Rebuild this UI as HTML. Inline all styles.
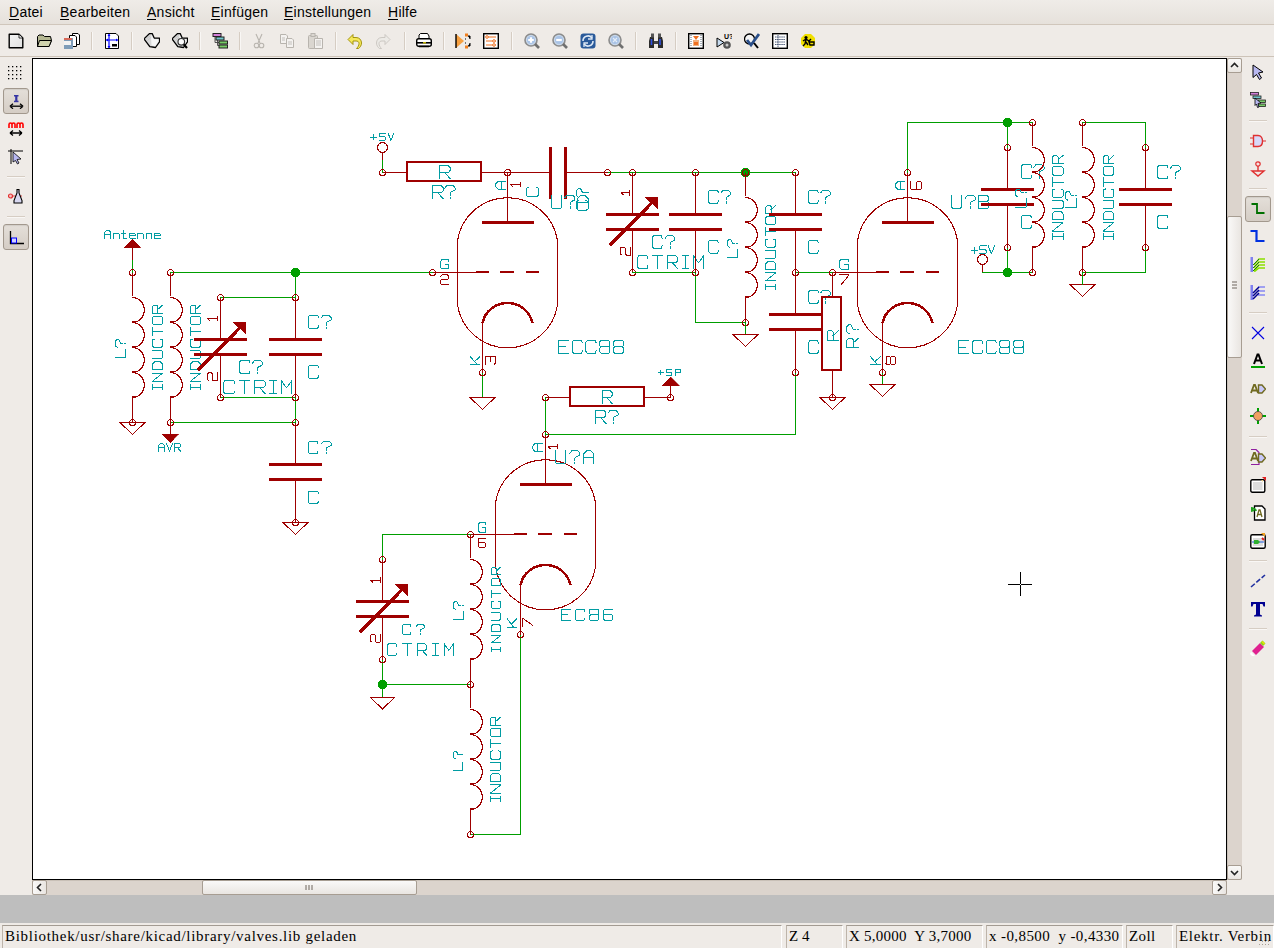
<!DOCTYPE html>
<html><head><meta charset="utf-8">
<style>
*{margin:0;padding:0;box-sizing:border-box}
html,body{width:1274px;height:948px;overflow:hidden;background:#EFEBE7;font-family:"Liberation Sans",sans-serif;position:relative}
.abs{position:absolute}
#menubar{left:0;top:0;width:1274px;height:25px;background:linear-gradient(#EFECE8,#E6E1DB);border-bottom:1px solid #D0C6BB}
.mi{position:absolute;top:4px;font-size:14px;letter-spacing:0.25px;color:#000;line-height:17px}
.mi u{text-decoration:none;position:relative}
.mi u:after{content:"";position:absolute;left:0;right:0.5px;top:15px;height:1px;background:#000}
#toolbar{left:0;top:25px;width:1274px;height:32px;background:#EFEBE7;border-bottom:1px solid #CDC3B8}
.sep{position:absolute;width:2px;background:#D6CDC3;border-right:1px solid #F9F7F5}
.hsep{position:absolute;height:2px;background:#D6CDC3;border-bottom:1px solid #F9F7F5}
#canvas{left:32px;top:58px;width:1195px;height:822px;background:#fff;border:1px solid #000;border-left-width:1px}
#vscroll{left:1227px;top:58px;width:15px;height:822px;background:#DCD4CD;border-left:1px solid #C9C0B7}
#hscroll{left:32px;top:880px;width:1195px;height:15px;background:#DCD4CD;border-top:1px solid #C9C0B7}
.sbtn{position:absolute;background:linear-gradient(90deg,#FAF9F8,#E9E5E1);border:1px solid #A79D92;border-radius:2px}
.sbtnv{position:absolute;background:linear-gradient(#FAF9F8,#E9E5E1);border:1px solid #A79D92;border-radius:2px}
#band{left:0;top:895px;width:1274px;height:28px;background:#BEBEBE}
#status{left:0;top:923px;width:1274px;height:25px;background:#EFEBE7}
.fld{position:absolute;top:2px;height:23px;border-top:1px solid #A39B92;border-left:1px solid #BDB4AA;border-right:1px solid #FFFFFF;font-family:"Liberation Serif",serif;font-size:15px;line-height:21px;padding-left:2px;white-space:nowrap;overflow:hidden;color:#000}
.pressed{position:absolute;background:linear-gradient(#E4DFD9,#D5CDC5);border:1px solid #A2988D;border-radius:3px;box-shadow:inset 0 1px 1px rgba(0,0,0,0.08)}
</style></head><body>
<div id="menubar" class="abs">
 <span class="mi" style="left:9px"><u>D</u>atei</span>
 <span class="mi" style="left:60px"><u>B</u>earbeiten</span>
 <span class="mi" style="left:147px"><u>A</u>nsicht</span>
 <span class="mi" style="left:211px"><u>E</u>infügen</span>
 <span class="mi" style="left:284px"><u>E</u>instellungen</span>
 <span class="mi" style="left:388px"><u>H</u>ilfe</span>
</div>
<div id="toolbar" class="abs"></div>
<div id="canvas" class="abs"></div>
<svg class="abs" style="left:0;top:0" width="1274" height="948" shape-rendering="crispEdges"><line x1="132.5" y1="259.5" x2="132.5" y2="272.5" stroke="#009E00" stroke-width="1" stroke-linecap="square"/><line x1="170.5" y1="272.5" x2="295.5" y2="272.5" stroke="#009E00" stroke-width="1" stroke-linecap="square"/><line x1="295.5" y1="272.5" x2="432.5" y2="272.5" stroke="#009E00" stroke-width="1" stroke-linecap="square"/><circle cx="295.5" cy="272.5" r="4.8" fill="#009E00"/><line x1="220.5" y1="297.5" x2="295.5" y2="297.5" stroke="#009E00" stroke-width="1" stroke-linecap="square"/><line x1="295.5" y1="272.5" x2="295.5" y2="297.5" stroke="#009E00" stroke-width="1" stroke-linecap="square"/><line x1="220.5" y1="397.5" x2="295.5" y2="397.5" stroke="#009E00" stroke-width="1" stroke-linecap="square"/><line x1="295.5" y1="397.5" x2="295.5" y2="422.5" stroke="#009E00" stroke-width="1" stroke-linecap="square"/><line x1="170.5" y1="422.5" x2="295.5" y2="422.5" stroke="#009E00" stroke-width="1" stroke-linecap="square"/><line x1="382.5" y1="159.5" x2="382.5" y2="172.5" stroke="#009E00" stroke-width="1" stroke-linecap="square"/><line x1="795.5" y1="172.5" x2="695.5" y2="172.5" stroke="#009E00" stroke-width="1" stroke-linecap="square"/><line x1="607.5" y1="172.5" x2="795.5" y2="172.5" stroke="#009E00" stroke-width="1" stroke-linecap="square"/><circle cx="745.5" cy="172.5" r="4.8" fill="#009E00"/><line x1="695.5" y1="272.5" x2="695.5" y2="322.5" stroke="#009E00" stroke-width="1" stroke-linecap="square"/><line x1="695.5" y1="322.5" x2="745.5" y2="322.5" stroke="#009E00" stroke-width="1" stroke-linecap="square"/><line x1="795.5" y1="272.5" x2="832.5" y2="272.5" stroke="#009E00" stroke-width="1" stroke-linecap="square"/><line x1="907.5" y1="172.5" x2="907.5" y2="122.5" stroke="#009E00" stroke-width="1" stroke-linecap="square"/><line x1="907.5" y1="122.5" x2="1032.5" y2="122.5" stroke="#009E00" stroke-width="1" stroke-linecap="square"/><circle cx="1007.5" cy="122.5" r="4.8" fill="#009E00"/><line x1="1007.5" y1="122.5" x2="1007.5" y2="147.5" stroke="#009E00" stroke-width="1" stroke-linecap="square"/><line x1="1082.5" y1="122.5" x2="1145.5" y2="122.5" stroke="#009E00" stroke-width="1" stroke-linecap="square"/><line x1="1145.5" y1="122.5" x2="1145.5" y2="147.5" stroke="#009E00" stroke-width="1" stroke-linecap="square"/><line x1="1145.5" y1="247.5" x2="1145.5" y2="272.5" stroke="#009E00" stroke-width="1" stroke-linecap="square"/><line x1="1082.5" y1="272.5" x2="1145.5" y2="272.5" stroke="#009E00" stroke-width="1" stroke-linecap="square"/><line x1="1082.5" y1="272.5" x2="1082.5" y2="284.5" stroke="#009E00" stroke-width="1" stroke-linecap="square"/><line x1="1007.5" y1="247.5" x2="1007.5" y2="272.5" stroke="#009E00" stroke-width="1" stroke-linecap="square"/><line x1="1032.5" y1="272.5" x2="982.5" y2="272.5" stroke="#009E00" stroke-width="1" stroke-linecap="square"/><circle cx="1007.5" cy="272.5" r="4.8" fill="#009E00"/><line x1="482.5" y1="372.5" x2="482.5" y2="397.5" stroke="#009E00" stroke-width="1" stroke-linecap="square"/><line x1="882.5" y1="372.5" x2="882.5" y2="384.5" stroke="#009E00" stroke-width="1" stroke-linecap="square"/><line x1="545.5" y1="397.5" x2="545.5" y2="434.5" stroke="#009E00" stroke-width="1" stroke-linecap="square"/><line x1="545.5" y1="434.5" x2="795.5" y2="434.5" stroke="#009E00" stroke-width="1" stroke-linecap="square"/><line x1="795.5" y1="434.5" x2="795.5" y2="372.5" stroke="#009E00" stroke-width="1" stroke-linecap="square"/><line x1="470.5" y1="534.5" x2="382.5" y2="534.5" stroke="#009E00" stroke-width="1" stroke-linecap="square"/><line x1="382.5" y1="534.5" x2="382.5" y2="559.5" stroke="#009E00" stroke-width="1" stroke-linecap="square"/><line x1="382.5" y1="659.5" x2="382.5" y2="684.5" stroke="#009E00" stroke-width="1" stroke-linecap="square"/><line x1="382.5" y1="684.5" x2="470.5" y2="684.5" stroke="#009E00" stroke-width="1" stroke-linecap="square"/><circle cx="382.5" cy="684.5" r="4.8" fill="#009E00"/><line x1="382.5" y1="684.5" x2="382.5" y2="697.5" stroke="#009E00" stroke-width="1" stroke-linecap="square"/><line x1="470.5" y1="834.5" x2="520.5" y2="834.5" stroke="#009E00" stroke-width="1" stroke-linecap="square"/><line x1="520.5" y1="834.5" x2="520.5" y2="634.5" stroke="#009E00" stroke-width="1" stroke-linecap="square"/><path d="M132.5 239 L124.5 247.5 L140.5 247.5 Z" stroke="#9E0000" stroke-width="0.5" fill="#9E0000"/><line x1="132.5" y1="247.5" x2="132.5" y2="259.5" stroke="#9E0000" stroke-width="1" stroke-linecap="butt"/><path d="M104.5 238.5 L104.5 232.5 L106.5 230.5 L108.9 230.5 L110.9 232.5 L110.9 238.5M104.5 234.9 L110.9 234.9M113.62 233.3 L113.62 238.5M113.62 234.1 L114.42 233.3 L118.42 233.3 L119.22 234.1 L119.22 238.5M123.13 230.5 L123.13 237.7 L123.93 238.5 L126.73 238.5M121.93 233.3 L125.93 233.3M129.45 235.86 L135.05 235.86 L135.05 234.1 L134.25 233.3 L130.25 233.3 L129.45 234.1 L129.45 237.7 L130.25 238.5 L135.05 238.5M137.77 233.3 L137.77 238.5M137.77 234.1 L138.57 233.3 L142.57 233.3 L143.37 234.1 L143.37 238.5M146.08 233.3 L146.08 238.5M146.08 234.1 L146.88 233.3 L150.88 233.3 L151.68 234.1 L151.68 238.5M154.4 235.86 L160 235.86 L160 234.1 L159.2 233.3 L155.2 233.3 L154.4 234.1 L154.4 237.7 L155.2 238.5 L160 238.5" stroke="#009CA2" stroke-width="1" fill="none" stroke-linejoin="round" stroke-linecap="square"/><line x1="132.5" y1="272.5" x2="132.5" y2="296" stroke="#9E0000" stroke-width="1" stroke-linecap="butt"/><path d="M132.5 297.5 A11.8 12.5 0 0 1 132.5 322.5 A11.8 12.5 0 0 1 132.5 347.5 A11.8 12.5 0 0 1 132.5 372.5 A11.8 12.5 0 0 1 132.5 397.5" stroke="#9E0000" stroke-width="1.2" fill="none"/><rect x="132" y="297" width="3.5" height="1" fill="#9E0000"/><rect x="132" y="321" width="3.5" height="2" fill="#9E0000"/><rect x="132" y="346" width="3.5" height="2" fill="#9E0000"/><rect x="132" y="371" width="3.5" height="2" fill="#9E0000"/><rect x="132" y="396" width="3.5" height="2" fill="#9E0000"/><line x1="132.5" y1="397.5" x2="132.5" y2="422.5" stroke="#9E0000" stroke-width="1" stroke-linecap="butt"/><circle cx="132.5" cy="272.5" r="3" stroke="#9E0000" stroke-width="1" fill="none"/><circle cx="132.5" cy="422.5" r="3" stroke="#9E0000" stroke-width="1" fill="none"/><path d="M120 422.5 L145 422.5 L132.5 434.5 L120 422.5 Z" stroke="#9E0000" stroke-width="1" fill="none"/><path d="M115.2 357.5 L125.5 357.5 L125.5 349.26M117.26 347.43 L115.2 345.89 L115.2 341.05 L116.95 339.5 L118.7 339.5 L120.76 343.31 L122.82 343.31M124.37 343.31 L125.5 343.31" stroke="#009CA2" stroke-width="1" fill="none" stroke-linejoin="round" stroke-linecap="square"/><path d="M152.5 389.5 L152.5 384.5M152.5 387 L162.5 387M162.5 389.5 L162.5 384.5M162.5 381.17 L152.5 381.17 L162.5 373.17 L152.5 373.17M152.5 369.84 L162.5 369.84 L162.5 363.84 L160.5 361.84 L154.5 361.84 L152.5 363.84 L152.5 369.84M152.5 358.51 L161.5 358.51 L162.5 357.51 L162.5 351.51 L161.5 350.51 L152.5 350.51M154.4 339.19 L152.5 339.79 L152.5 346.19 L153.8 347.19 L161.2 347.19 L162.5 346.19 L162.5 339.79 L160.6 339.19M152.5 335.86 L152.5 327.86M152.5 331.86 L162.5 331.86M152.5 323.53 L152.5 317.53 L153.5 316.53 L161.5 316.53 L162.5 317.53 L162.5 323.53 L161.5 324.53 L153.5 324.53 L152.5 323.53M162.5 313.2 L152.5 313.2 L152.5 306.7 L154 305.2 L156.5 305.2 L157.8 306.4 L157.8 313.2M157.8 309.4 L162.5 305.2" stroke="#009CA2" stroke-width="1" fill="none" stroke-linejoin="round" stroke-linecap="square"/><line x1="170.5" y1="272.5" x2="170.5" y2="296" stroke="#9E0000" stroke-width="1" stroke-linecap="butt"/><path d="M170.5 297.5 A11.8 12.5 0 0 1 170.5 322.5 A11.8 12.5 0 0 1 170.5 347.5 A11.8 12.5 0 0 1 170.5 372.5 A11.8 12.5 0 0 1 170.5 397.5" stroke="#9E0000" stroke-width="1.2" fill="none"/><rect x="170" y="297" width="3.5" height="1" fill="#9E0000"/><rect x="170" y="321" width="3.5" height="2" fill="#9E0000"/><rect x="170" y="346" width="3.5" height="2" fill="#9E0000"/><rect x="170" y="371" width="3.5" height="2" fill="#9E0000"/><rect x="170" y="396" width="3.5" height="2" fill="#9E0000"/><line x1="170.5" y1="397.5" x2="170.5" y2="422.5" stroke="#9E0000" stroke-width="1" stroke-linecap="butt"/><circle cx="170.5" cy="272.5" r="3" stroke="#9E0000" stroke-width="1" fill="none"/><circle cx="170.5" cy="422.5" r="3" stroke="#9E0000" stroke-width="1" fill="none"/><line x1="170.5" y1="422.5" x2="170.5" y2="434" stroke="#9E0000" stroke-width="1" stroke-linecap="butt"/><path d="M162 434 L178.5 434 L170.5 443 Z" stroke="#9E0000" stroke-width="0.5" fill="#9E0000"/><path d="M158.5 451 L158.5 445.38 L160.38 443.5 L162.62 443.5 L164.5 445.38 L164.5 451M158.5 447.62 L164.5 447.62M166.5 443.5 L169.5 451 L172.5 443.5M174.5 451 L174.5 443.5 L179.38 443.5 L180.5 444.62 L180.5 446.5 L179.6 447.48 L174.5 447.48M177.35 447.48 L180.5 451" stroke="#009CA2" stroke-width="1" fill="none" stroke-linejoin="round" stroke-linecap="square"/><path d="M190.5 389.5 L190.5 384.5M190.5 387 L200.5 387M200.5 389.5 L200.5 384.5M200.5 381.17 L190.5 381.17 L200.5 373.17 L190.5 373.17M190.5 369.84 L200.5 369.84 L200.5 363.84 L198.5 361.84 L192.5 361.84 L190.5 363.84 L190.5 369.84M190.5 358.51 L199.5 358.51 L200.5 357.51 L200.5 351.51 L199.5 350.51 L190.5 350.51M192.4 339.19 L190.5 339.79 L190.5 346.19 L191.8 347.19 L199.2 347.19 L200.5 346.19 L200.5 339.79 L198.6 339.19M190.5 335.86 L190.5 327.86M190.5 331.86 L200.5 331.86M190.5 323.53 L190.5 317.53 L191.5 316.53 L199.5 316.53 L200.5 317.53 L200.5 323.53 L199.5 324.53 L191.5 324.53 L190.5 323.53M200.5 313.2 L190.5 313.2 L190.5 306.7 L192 305.2 L194.5 305.2 L195.8 306.4 L195.8 313.2M195.8 309.4 L200.5 305.2" stroke="#009CA2" stroke-width="1" fill="none" stroke-linejoin="round" stroke-linecap="square"/><line x1="220.5" y1="297.5" x2="220.5" y2="339.5" stroke="#9E0000" stroke-width="1" stroke-linecap="butt"/><line x1="220.5" y1="354.5" x2="220.5" y2="397.5" stroke="#9E0000" stroke-width="1" stroke-linecap="butt"/><line x1="194" y1="339.5" x2="247" y2="339.5" stroke="#9E0000" stroke-width="3" stroke-linecap="butt"/><line x1="194" y1="354.5" x2="247" y2="354.5" stroke="#9E0000" stroke-width="3" stroke-linecap="butt"/><circle cx="220.5" cy="297.5" r="3" stroke="#9E0000" stroke-width="1" fill="none"/><circle cx="220.5" cy="397.5" r="3" stroke="#9E0000" stroke-width="1" fill="none"/><line x1="198" y1="370" x2="240.5" y2="327" stroke="#9E0000" stroke-width="3.5" stroke-linecap="butt"/><path d="M245.5 322 L232.5 322 L245.5 334 Z" stroke="#9E0000" stroke-width="0.5" fill="#9E0000"/><path d="M209.46 320.25 L207.5 318.75 L217.3 318.75M217.3 320.62 L217.3 316.88" stroke="#9E0000" stroke-width="1" fill="none" stroke-linejoin="round" stroke-linecap="square"/><path d="M208.97 380.8 L207.5 379.62 L207.5 373.89 L208.48 372.9 L211.42 372.9 L212.4 373.89 L212.4 379.81 L213.38 380.8 L217.3 380.8 L217.3 372.9" stroke="#9E0000" stroke-width="1" fill="none" stroke-linejoin="round" stroke-linecap="square"/><path d="M249.9 362.97 L249.12 360.5 L240.8 360.5 L239.5 362.19 L239.5 371.81 L240.8 373.5 L249.12 373.5 L249.9 371.03M252.49 363.1 L254.44 360.5 L260.55 360.5 L262.5 362.71 L262.5 364.92 L257.69 367.52 L257.69 370.12M257.69 372.07 L257.69 373.5" stroke="#009CA2" stroke-width="1" fill="none" stroke-linejoin="round" stroke-linecap="square"/><path d="M234.52 383.05 L233.72 380.5 L225.14 380.5 L223.8 382.24 L223.8 392.16 L225.14 393.9 L233.72 393.9 L234.52 391.35M239.15 380.5 L249.87 380.5M244.51 380.5 L244.51 393.9M254.5 393.9 L254.5 380.5 L263.21 380.5 L265.22 382.51 L265.22 385.86 L263.61 387.6 L254.5 387.6M259.59 387.6 L265.22 393.9M269.85 380.5 L276.55 380.5M273.2 380.5 L273.2 393.9M269.85 393.9 L276.55 393.9M281.18 393.9 L281.18 380.5 L286.54 387.87 L291.9 380.5 L291.9 393.9" stroke="#009CA2" stroke-width="1" fill="none" stroke-linejoin="round" stroke-linecap="square"/><line x1="295.5" y1="297.5" x2="295.5" y2="339.5" stroke="#9E0000" stroke-width="1" stroke-linecap="butt"/><line x1="295.5" y1="354.5" x2="295.5" y2="397.5" stroke="#9E0000" stroke-width="1" stroke-linecap="butt"/><line x1="269" y1="339.5" x2="322" y2="339.5" stroke="#9E0000" stroke-width="3" stroke-linecap="butt"/><line x1="269" y1="354.5" x2="322" y2="354.5" stroke="#9E0000" stroke-width="3" stroke-linecap="butt"/><circle cx="295.5" cy="297.5" r="3" stroke="#9E0000" stroke-width="1" fill="none"/><circle cx="295.5" cy="397.5" r="3" stroke="#9E0000" stroke-width="1" fill="none"/><path d="M318.5 317.97 L317.72 315.5 L309.4 315.5 L308.1 317.19 L308.1 326.81 L309.4 328.5 L317.72 328.5 L318.5 326.03M321.09 318.1 L323.04 315.5 L329.15 315.5 L331.1 317.71 L331.1 319.92 L326.29 322.52 L326.29 325.12M326.29 327.07 L326.29 328.5" stroke="#009CA2" stroke-width="1" fill="none" stroke-linejoin="round" stroke-linecap="square"/><path d="M318.5 367.97 L317.72 365.5 L309.4 365.5 L308.1 367.19 L308.1 376.81 L309.4 378.5 L317.72 378.5 L318.5 376.03" stroke="#009CA2" stroke-width="1" fill="none" stroke-linejoin="round" stroke-linecap="square"/><line x1="295.5" y1="422.5" x2="295.5" y2="464.5" stroke="#9E0000" stroke-width="1" stroke-linecap="butt"/><line x1="295.5" y1="479.5" x2="295.5" y2="522.5" stroke="#9E0000" stroke-width="1" stroke-linecap="butt"/><line x1="269" y1="464.5" x2="322" y2="464.5" stroke="#9E0000" stroke-width="3" stroke-linecap="butt"/><line x1="269" y1="479.5" x2="322" y2="479.5" stroke="#9E0000" stroke-width="3" stroke-linecap="butt"/><circle cx="295.5" cy="422.5" r="3" stroke="#9E0000" stroke-width="1" fill="none"/><circle cx="295.5" cy="522.5" r="3" stroke="#9E0000" stroke-width="1" fill="none"/><path d="M317.86 443.62 L317.13 441.3 L309.32 441.3 L308.1 442.89 L308.1 451.91 L309.32 453.5 L317.13 453.5 L317.86 451.18M321.71 443.74 L323.54 441.3 L329.27 441.3 L331.1 443.37 L331.1 445.45 L326.59 447.89 L326.59 450.33M326.59 452.16 L326.59 453.5" stroke="#009CA2" stroke-width="1" fill="none" stroke-linejoin="round" stroke-linecap="square"/><path d="M318.5 493.46 L317.72 491.1 L309.4 491.1 L308.1 492.71 L308.1 501.89 L309.4 503.5 L317.72 503.5 L318.5 501.14" stroke="#009CA2" stroke-width="1" fill="none" stroke-linejoin="round" stroke-linecap="square"/><path d="M283 522.5 L308 522.5 L295.5 534.5 L283 522.5 Z" stroke="#9E0000" stroke-width="1" fill="none"/><circle cx="382.5" cy="147.5" r="5" stroke="#9E0000" stroke-width="1.1" fill="none"/><line x1="382.5" y1="152.5" x2="382.5" y2="159.5" stroke="#9E0000" stroke-width="1" stroke-linecap="butt"/><path d="M370.9 137.22 L376.74 137.22M373.82 134.66 L373.82 139.77M385.32 133.2 L379.48 133.2 L379.48 136.85 L384.59 136.85 L385.32 137.58 L385.32 139.77 L384.59 140.5 L379.48 140.5M388.06 133.2 L390.98 140.5 L393.9 133.2" stroke="#009CA2" stroke-width="1" fill="none" stroke-linejoin="round" stroke-linecap="square"/><circle cx="382.5" cy="172.5" r="3" stroke="#9E0000" stroke-width="1" fill="none"/><line x1="382.5" y1="172.5" x2="407" y2="172.5" stroke="#9E0000" stroke-width="1" stroke-linecap="butt"/><line x1="481" y1="172.5" x2="507.5" y2="172.5" stroke="#9E0000" stroke-width="1" stroke-linecap="butt"/><rect x="407" y="162" width="74" height="19" fill="none" stroke="#9E0000" stroke-width="2"/><path d="M439.5 178.5 L439.5 165.5 L448.03 165.5 L450 167.45 L450 170.7 L448.43 172.39 L439.5 172.39M444.49 172.39 L450 178.5" stroke="#009CA2" stroke-width="1" fill="none" stroke-linejoin="round" stroke-linecap="square"/><path d="M432.5 198.7 L432.5 185.5 L441.08 185.5 L443.06 187.48 L443.06 190.78 L441.48 192.5 L432.5 192.5M437.52 192.5 L443.06 198.7M444.84 188.14 L446.82 185.5 L453.02 185.5 L455 187.74 L455 189.99 L450.12 192.63 L450.12 195.27M450.12 197.25 L450.12 198.7" stroke="#009CA2" stroke-width="1" fill="none" stroke-linejoin="round" stroke-linecap="square"/><line x1="507.5" y1="172.5" x2="550.5" y2="172.5" stroke="#9E0000" stroke-width="1" stroke-linecap="butt"/><line x1="565.5" y1="172.5" x2="607.5" y2="172.5" stroke="#9E0000" stroke-width="1" stroke-linecap="butt"/><line x1="550.5" y1="146.5" x2="550.5" y2="198.5" stroke="#9E0000" stroke-width="3" stroke-linecap="butt"/><line x1="565.5" y1="146.5" x2="565.5" y2="198.5" stroke="#9E0000" stroke-width="3" stroke-linecap="butt"/><circle cx="507.5" cy="172.5" r="3" stroke="#9E0000" stroke-width="1" fill="none"/><circle cx="607.5" cy="172.5" r="3" stroke="#9E0000" stroke-width="1" fill="none"/><line x1="507.5" y1="172.5" x2="507.5" y2="222.5" stroke="#9E0000" stroke-width="1" stroke-linecap="butt"/><line x1="481.5" y1="222.5" x2="533.5" y2="222.5" stroke="#9E0000" stroke-width="3" stroke-linecap="butt"/><path d="M457.5 305 L457.5 240.5 A50.6 50.6 0 0 1 557.5 240.5 L557.5 305 A50.6 50.6 0 0 1 457.5 305" stroke="#9E0000" stroke-width="1.1" fill="none"/><line x1="432.5" y1="272.5" x2="476" y2="272.5" stroke="#9E0000" stroke-width="1" stroke-linecap="butt"/><line x1="476" y1="272" x2="488.5" y2="272" stroke="#9E0000" stroke-width="2" stroke-linecap="butt"/><line x1="500" y1="272" x2="514" y2="272" stroke="#9E0000" stroke-width="2" stroke-linecap="butt"/><line x1="525.5" y1="272" x2="538.5" y2="272" stroke="#9E0000" stroke-width="2" stroke-linecap="butt"/><circle cx="507.5" cy="172.5" r="3" stroke="#9E0000" stroke-width="1" fill="none"/><circle cx="432.5" cy="272.5" r="3" stroke="#9E0000" stroke-width="1" fill="none"/><path d="M482.5 323 A25.6 25.6 0 0 1 532.5 323" stroke="#9E0000" stroke-width="2.6" fill="none"/><line x1="482.5" y1="322.5" x2="482.5" y2="372.5" stroke="#9E0000" stroke-width="1" stroke-linecap="butt"/><circle cx="482.5" cy="372.5" r="3" stroke="#9E0000" stroke-width="1" fill="none"/><path d="M505.4 189.5 L498.2 189.5 L495.8 186.88 L495.8 183.72 L498.2 181.1 L505.4 181.1M501.08 189.5 L501.08 181.1" stroke="#009CA2" stroke-width="1" fill="none" stroke-linejoin="round" stroke-linecap="square"/><path d="M512.54 186.22 L510.5 184.65 L520.7 184.65M520.7 186.61 L520.7 182.69" stroke="#9E0000" stroke-width="1" fill="none" stroke-linejoin="round" stroke-linecap="square"/><path d="M528.76 187.5 L526.5 188.18 L526.5 195.46 L528.05 196.6 L536.85 196.6 L538.4 195.46 L538.4 188.18 L536.14 187.5" stroke="#009CA2" stroke-width="1" fill="none" stroke-linejoin="round" stroke-linecap="square"/><path d="M578.7 200.72 L576.5 201.42 L576.5 208.84 L578.01 210 L586.59 210 L588.1 208.84 L588.1 201.42 L585.9 200.72M578.82 197.43 L576.5 195.69 L576.5 190.24 L578.47 188.5 L580.44 188.5 L582.76 192.79 L585.08 192.79M586.82 192.79 L588.1 192.79" stroke="#009CA2" stroke-width="1" fill="none" stroke-linejoin="round" stroke-linecap="square"/><path d="M551.2 195.3 L551.2 207.09 L552.51 208.4 L560.37 208.4 L561.68 207.09 L561.68 195.3M564.8 197.92 L566.77 195.3 L572.93 195.3 L574.89 197.53 L574.89 199.75 L570.04 202.37 L570.04 204.99M570.04 206.96 L570.04 208.4M577.62 208.4 L577.62 198.58 L580.89 195.3 L584.83 195.3 L588.1 198.58 L588.1 208.4M577.62 202.5 L588.1 202.5" stroke="#009CA2" stroke-width="1" fill="none" stroke-linejoin="round" stroke-linecap="square"/><path d="M448.3 261.4 L448.3 259.8 L441.74 259.8 L440.8 260.96 L440.8 267.54 L441.74 268.7 L448.3 268.7 L448.3 264.69 L445.02 264.69" stroke="#009CA2" stroke-width="1" fill="none" stroke-linejoin="round" stroke-linecap="square"/><path d="M440.8 276.28 L441.93 274.9 L447.36 274.9 L448.3 275.82 L448.3 278.58 L447.36 279.5 L441.74 279.5 L440.8 280.42 L440.8 284.1 L448.3 284.1" stroke="#9E0000" stroke-width="1" fill="none" stroke-linejoin="round" stroke-linecap="square"/><path d="M470.5 364 L479.9 364M470.5 356.8 L476.61 364M474.54 361.48 L479.9 356.8" stroke="#009CA2" stroke-width="1" fill="none" stroke-linejoin="round" stroke-linecap="square"/><path d="M485.7 364 L485.7 356.1 L489.66 356.1 L490.65 357.09 L490.65 361.53M490.65 357.09 L491.64 356.1 L494.61 356.1 L495.6 357.09 L495.6 363.01 L494.61 364" stroke="#9E0000" stroke-width="1" fill="none" stroke-linejoin="round" stroke-linecap="square"/><path d="M568.56 340.5 L558.4 340.5 L558.4 353.2 L568.56 353.2M558.4 346.85 L565.13 346.85M582.35 342.91 L581.58 340.5 L573.46 340.5 L572.18 342.15 L572.18 351.55 L573.46 353.2 L581.58 353.2 L582.35 350.79M596.13 342.91 L595.37 340.5 L587.24 340.5 L585.97 342.15 L585.97 351.55 L587.24 353.2 L595.37 353.2 L596.13 350.79M601.03 340.5 L608.64 340.5 L609.91 341.77 L609.91 345.58 L608.64 346.85 L601.03 346.85 L599.75 345.58 L599.75 341.77 L601.03 340.5M601.03 346.85 L599.75 348.12 L599.75 351.93 L601.03 353.2 L608.64 353.2 L609.91 351.93 L609.91 348.12 L608.64 346.85M614.81 340.5 L622.43 340.5 L623.7 341.77 L623.7 345.58 L622.43 346.85 L614.81 346.85 L613.54 345.58 L613.54 341.77 L614.81 340.5M614.81 346.85 L613.54 348.12 L613.54 351.93 L614.81 353.2 L622.43 353.2 L623.7 351.93 L623.7 348.12 L622.43 346.85" stroke="#009CA2" stroke-width="1" fill="none" stroke-linejoin="round" stroke-linecap="square"/><path d="M470 397.5 L495 397.5 L482.5 409.5 L470 397.5 Z" stroke="#9E0000" stroke-width="1" fill="none"/><line x1="632.5" y1="172.5" x2="632.5" y2="214.5" stroke="#9E0000" stroke-width="1" stroke-linecap="butt"/><line x1="632.5" y1="229.5" x2="632.5" y2="272.5" stroke="#9E0000" stroke-width="1" stroke-linecap="butt"/><line x1="606" y1="214.5" x2="659" y2="214.5" stroke="#9E0000" stroke-width="3" stroke-linecap="butt"/><line x1="606" y1="229.5" x2="659" y2="229.5" stroke="#9E0000" stroke-width="3" stroke-linecap="butt"/><circle cx="632.5" cy="172.5" r="3" stroke="#9E0000" stroke-width="1" fill="none"/><circle cx="632.5" cy="272.5" r="3" stroke="#9E0000" stroke-width="1" fill="none"/><line x1="610" y1="245" x2="652.5" y2="202" stroke="#9E0000" stroke-width="3.5" stroke-linecap="butt"/><path d="M657.5 197 L644.5 197 L657.5 209 Z" stroke="#9E0000" stroke-width="0.5" fill="#9E0000"/><line x1="632.5" y1="272.5" x2="695.5" y2="272.5" stroke="#009E00" stroke-width="1" stroke-linecap="square"/><path d="M623.1 194.62 L621.5 192.85 L629.5 192.85M629.5 195.06 L629.5 190.64" stroke="#9E0000" stroke-width="1" fill="none" stroke-linejoin="round" stroke-linecap="square"/><path d="M621.75 255 L620.2 253.81 L620.2 248.09 L621.23 247.1 L624.32 247.1 L625.35 248.09 L625.35 254.01 L626.38 255 L630.5 255 L630.5 247.1" stroke="#9E0000" stroke-width="1" fill="none" stroke-linejoin="round" stroke-linecap="square"/><path d="M662.14 238.14 L661.4 235.8 L653.53 235.8 L652.3 237.4 L652.3 246.5 L653.53 248.1 L661.4 248.1 L662.14 245.76M665.13 238.26 L666.97 235.8 L672.75 235.8 L674.6 237.89 L674.6 239.98 L670.05 242.44 L670.05 244.9M670.05 246.75 L670.05 248.1" stroke="#009CA2" stroke-width="1" fill="none" stroke-linejoin="round" stroke-linecap="square"/><path d="M647.76 258.21 L647 255.8 L638.87 255.8 L637.6 257.45 L637.6 266.85 L638.87 268.5 L647 268.5 L647.76 266.09M652.51 255.8 L662.67 255.8M657.59 255.8 L657.59 268.5M667.43 268.5 L667.43 255.8 L675.68 255.8 L677.59 257.7 L677.59 260.88 L676.06 262.53 L667.43 262.53M672.25 262.53 L677.59 268.5M682.34 255.8 L688.69 255.8M685.51 255.8 L685.51 268.5M682.34 268.5 L688.69 268.5M693.44 268.5 L693.44 255.8 L698.52 262.79 L703.6 255.8 L703.6 268.5" stroke="#009CA2" stroke-width="1" fill="none" stroke-linejoin="round" stroke-linecap="square"/><line x1="695.5" y1="172.5" x2="695.5" y2="214.5" stroke="#9E0000" stroke-width="1" stroke-linecap="butt"/><line x1="695.5" y1="229.5" x2="695.5" y2="272.5" stroke="#9E0000" stroke-width="1" stroke-linecap="butt"/><line x1="669" y1="214.5" x2="722" y2="214.5" stroke="#9E0000" stroke-width="3" stroke-linecap="butt"/><line x1="669" y1="229.5" x2="722" y2="229.5" stroke="#9E0000" stroke-width="3" stroke-linecap="butt"/><circle cx="695.5" cy="172.5" r="3" stroke="#9E0000" stroke-width="1" fill="none"/><circle cx="695.5" cy="272.5" r="3" stroke="#9E0000" stroke-width="1" fill="none"/><path d="M718.46 192.91 L717.7 190.5 L709.57 190.5 L708.3 192.15 L708.3 201.55 L709.57 203.2 L717.7 203.2 L718.46 200.79M720.92 193.04 L722.83 190.5 L728.8 190.5 L730.7 192.66 L730.7 194.82 L726 197.36 L726 199.9M726 201.8 L726 203.2" stroke="#009CA2" stroke-width="1" fill="none" stroke-linejoin="round" stroke-linecap="square"/><path d="M718.4 242.88 L717.64 240.5 L709.56 240.5 L708.3 242.12 L708.3 251.38 L709.56 253 L717.64 253 L718.4 250.62" stroke="#009CA2" stroke-width="1" fill="none" stroke-linejoin="round" stroke-linecap="square"/><line x1="745.5" y1="172.5" x2="745.5" y2="196" stroke="#9E0000" stroke-width="1" stroke-linecap="butt"/><path d="M745.5 197.5 A11.8 12.5 0 0 1 745.5 222.5 A11.8 12.5 0 0 1 745.5 247.5 A11.8 12.5 0 0 1 745.5 272.5 A11.8 12.5 0 0 1 745.5 297.5" stroke="#9E0000" stroke-width="1.2" fill="none"/><rect x="745" y="197" width="3.5" height="1" fill="#9E0000"/><rect x="745" y="221" width="3.5" height="2" fill="#9E0000"/><rect x="745" y="246" width="3.5" height="2" fill="#9E0000"/><rect x="745" y="271" width="3.5" height="2" fill="#9E0000"/><rect x="745" y="296" width="3.5" height="2" fill="#9E0000"/><line x1="745.5" y1="297.5" x2="745.5" y2="322.5" stroke="#9E0000" stroke-width="1" stroke-linecap="butt"/><circle cx="745.5" cy="172.5" r="3" stroke="#9E0000" stroke-width="1" fill="none"/><circle cx="745.5" cy="322.5" r="3" stroke="#9E0000" stroke-width="1" fill="none"/><line x1="745.5" y1="322.5" x2="745.5" y2="334.5" stroke="#009E00" stroke-width="1" stroke-linecap="square"/><path d="M733 334.5 L758 334.5 L745.5 346.5 L733 334.5 Z" stroke="#9E0000" stroke-width="1" fill="none"/><path d="M727.3 257.7 L737.3 257.7 L737.3 249.7M729.3 247.2 L727.3 245.7 L727.3 241 L729 239.5 L730.7 239.5 L732.7 243.2 L734.7 243.2M736.2 243.2 L737.3 243.2" stroke="#009CA2" stroke-width="1" fill="none" stroke-linejoin="round" stroke-linecap="square"/><path d="M765.9 289 L765.9 284.1M765.9 286.55 L775.7 286.55M775.7 289 L775.7 284.1M775.7 280.71 L765.9 280.71 L775.7 272.87 L765.9 272.87M765.9 269.48 L775.7 269.48 L775.7 263.6 L773.74 261.64 L767.86 261.64 L765.9 263.6 L765.9 269.48M765.9 258.25 L774.72 258.25 L775.7 257.27 L775.7 251.39 L774.72 250.41 L765.9 250.41M767.76 239.19 L765.9 239.77 L765.9 246.05 L767.17 247.03 L774.43 247.03 L775.7 246.05 L775.7 239.77 L773.84 239.19M765.9 235.8 L765.9 227.96M765.9 231.88 L775.7 231.88M765.9 223.59 L765.9 217.71 L766.88 216.73 L774.72 216.73 L775.7 217.71 L775.7 223.59 L774.72 224.57 L766.88 224.57 L765.9 223.59M775.7 213.34 L765.9 213.34 L765.9 206.97 L767.37 205.5 L769.82 205.5 L771.09 206.68 L771.09 213.34M771.09 209.62 L775.7 205.5" stroke="#009CA2" stroke-width="1" fill="none" stroke-linejoin="round" stroke-linecap="square"/><line x1="795.5" y1="172.5" x2="795.5" y2="214.5" stroke="#9E0000" stroke-width="1" stroke-linecap="butt"/><line x1="795.5" y1="229.5" x2="795.5" y2="272.5" stroke="#9E0000" stroke-width="1" stroke-linecap="butt"/><line x1="769" y1="214.5" x2="822" y2="214.5" stroke="#9E0000" stroke-width="3" stroke-linecap="butt"/><line x1="769" y1="229.5" x2="822" y2="229.5" stroke="#9E0000" stroke-width="3" stroke-linecap="butt"/><circle cx="795.5" cy="172.5" r="3" stroke="#9E0000" stroke-width="1" fill="none"/><circle cx="795.5" cy="272.5" r="3" stroke="#9E0000" stroke-width="1" fill="none"/><path d="M818.36 192.91 L817.6 190.5 L809.47 190.5 L808.2 192.15 L808.2 201.55 L809.47 203.2 L817.6 203.2 L818.36 200.79M820.72 193.04 L822.63 190.5 L828.6 190.5 L830.5 192.66 L830.5 194.82 L825.8 197.36 L825.8 199.9M825.8 201.8 L825.8 203.2" stroke="#009CA2" stroke-width="1" fill="none" stroke-linejoin="round" stroke-linecap="square"/><path d="M818.4 242.88 L817.63 240.5 L809.48 240.5 L808.2 242.12 L808.2 251.38 L809.48 253 L817.63 253 L818.4 250.62" stroke="#009CA2" stroke-width="1" fill="none" stroke-linejoin="round" stroke-linecap="square"/><line x1="795.5" y1="272.5" x2="795.5" y2="314.5" stroke="#9E0000" stroke-width="1" stroke-linecap="butt"/><line x1="795.5" y1="329.5" x2="795.5" y2="372.5" stroke="#9E0000" stroke-width="1" stroke-linecap="butt"/><line x1="769" y1="314.5" x2="822" y2="314.5" stroke="#9E0000" stroke-width="3" stroke-linecap="butt"/><line x1="769" y1="329.5" x2="822" y2="329.5" stroke="#9E0000" stroke-width="3" stroke-linecap="butt"/><circle cx="795.5" cy="272.5" r="3" stroke="#9E0000" stroke-width="1" fill="none"/><circle cx="795.5" cy="372.5" r="3" stroke="#9E0000" stroke-width="1" fill="none"/><path d="M818.58 292.89 L817.82 290.5 L809.76 290.5 L808.5 292.14 L808.5 301.46 L809.76 303.1 L817.82 303.1 L818.58 300.71M820.7 293.02 L822.59 290.5 L828.51 290.5 L830.4 292.64 L830.4 294.78 L825.74 297.3 L825.74 299.82M825.74 301.71 L825.74 303.1" stroke="#009CA2" stroke-width="1" fill="none" stroke-linejoin="round" stroke-linecap="square"/><path d="M818.5 343.19 L817.75 340.8 L809.75 340.8 L808.5 342.44 L808.5 351.76 L809.75 353.4 L817.75 353.4 L818.5 351.01" stroke="#009CA2" stroke-width="1" fill="none" stroke-linejoin="round" stroke-linecap="square"/><line x1="832.5" y1="272.5" x2="832.5" y2="297" stroke="#9E0000" stroke-width="1" stroke-linecap="butt"/><line x1="832.5" y1="370" x2="832.5" y2="397.5" stroke="#9E0000" stroke-width="1" stroke-linecap="butt"/><rect x="822" y="297" width="19" height="73" fill="none" stroke="#9E0000" stroke-width="2"/><path d="M838.5 340.1 L827 340.1 L827 332.3 L828.73 330.5 L831.6 330.5 L833.1 331.94 L833.1 340.1M833.1 335.54 L838.5 330.5" stroke="#009CA2" stroke-width="1" fill="none" stroke-linejoin="round" stroke-linecap="square"/><path d="M858.5 347.5 L846.9 347.5 L846.9 339.96 L848.64 338.22 L851.54 338.22 L853.05 339.61 L853.05 347.5M853.05 343.09 L858.5 338.22M849.22 333.73 L846.9 331.99 L846.9 326.54 L848.87 324.8 L850.84 324.8 L853.16 329.09 L855.48 329.09M857.22 329.09 L858.5 329.09" stroke="#009CA2" stroke-width="1" fill="none" stroke-linejoin="round" stroke-linecap="square"/><circle cx="832.5" cy="272.5" r="3" stroke="#9E0000" stroke-width="1" fill="none"/><circle cx="832.5" cy="397.5" r="3" stroke="#9E0000" stroke-width="1" fill="none"/><path d="M820 397.5 L845 397.5 L832.5 409.5 L820 397.5 Z" stroke="#9E0000" stroke-width="1" fill="none"/><line x1="907.5" y1="172.5" x2="907.5" y2="222.5" stroke="#9E0000" stroke-width="1" stroke-linecap="butt"/><line x1="881.5" y1="222.5" x2="933.5" y2="222.5" stroke="#9E0000" stroke-width="3" stroke-linecap="butt"/><path d="M857.5 305 L857.5 240.5 A50.6 50.6 0 0 1 957.5 240.5 L957.5 305 A50.6 50.6 0 0 1 857.5 305" stroke="#9E0000" stroke-width="1.1" fill="none"/><line x1="832.5" y1="272.5" x2="876" y2="272.5" stroke="#9E0000" stroke-width="1" stroke-linecap="butt"/><line x1="876" y1="272" x2="888.5" y2="272" stroke="#9E0000" stroke-width="2" stroke-linecap="butt"/><line x1="900" y1="272" x2="914" y2="272" stroke="#9E0000" stroke-width="2" stroke-linecap="butt"/><line x1="925.5" y1="272" x2="938.5" y2="272" stroke="#9E0000" stroke-width="2" stroke-linecap="butt"/><circle cx="907.5" cy="172.5" r="3" stroke="#9E0000" stroke-width="1" fill="none"/><circle cx="832.5" cy="272.5" r="3" stroke="#9E0000" stroke-width="1" fill="none"/><path d="M882.5 323 A25.6 25.6 0 0 1 932.5 323" stroke="#9E0000" stroke-width="2.6" fill="none"/><line x1="882.5" y1="322.5" x2="882.5" y2="372.5" stroke="#9E0000" stroke-width="1" stroke-linecap="butt"/><circle cx="882.5" cy="372.5" r="3" stroke="#9E0000" stroke-width="1" fill="none"/><path d="M904.5 189.5 L897.75 189.5 L895.5 187 L895.5 184 L897.75 181.5 L904.5 181.5M900.45 189.5 L900.45 181.5" stroke="#009CA2" stroke-width="1" fill="none" stroke-linejoin="round" stroke-linecap="square"/><path d="M910.5 181.5 L910.5 188.5 L911.93 189.5 L920.07 189.5 L921.5 188.5 L921.5 182.5 L920.4 181.5 L917.32 181.5 L916.22 182.5 L916.22 189.5" stroke="#9E0000" stroke-width="1" fill="none" stroke-linejoin="round" stroke-linecap="square"/><path d="M951.4 195.3 L951.4 206.91 L952.69 208.2 L960.43 208.2 L961.72 206.91 L961.72 195.3M965.38 197.88 L967.31 195.3 L973.38 195.3 L975.31 197.49 L975.31 199.69 L970.54 202.27 L970.54 204.85M970.54 206.78 L970.54 208.2M978.58 195.3 L978.58 208.2 L987.61 208.2 L988.9 206.91 L988.9 203.04 L987.61 201.75 L978.58 201.75M978.58 195.3 L986.97 195.3 L988.25 196.59 L988.25 200.46 L986.97 201.75" stroke="#009CA2" stroke-width="1" fill="none" stroke-linejoin="round" stroke-linecap="square"/><path d="M848.5 261.23 L848.5 259.5 L840.98 259.5 L839.9 260.75 L839.9 267.85 L840.98 269.1 L848.5 269.1 L848.5 264.78 L844.74 264.78" stroke="#009CA2" stroke-width="1" fill="none" stroke-linejoin="round" stroke-linecap="square"/><path d="M839.9 274.5 L848.5 274.5 L848.5 275.68 L841.51 284.3" stroke="#9E0000" stroke-width="1" fill="none" stroke-linejoin="round" stroke-linecap="square"/><path d="M870.5 364.5 L880.5 364.5M870.5 356.5 L877 364.5M874.8 361.7 L880.5 356.5" stroke="#009CA2" stroke-width="1" fill="none" stroke-linejoin="round" stroke-linecap="square"/><path d="M886 363.5 L886 357.5 L886.95 356.5 L889.8 356.5 L890.75 357.5 L890.75 363.5 L889.8 364.5 L886.95 364.5 L886 363.5M890.75 363.5 L891.7 364.5 L894.55 364.5 L895.5 363.5 L895.5 357.5 L894.55 356.5 L891.7 356.5 L890.75 357.5" stroke="#9E0000" stroke-width="1" fill="none" stroke-linejoin="round" stroke-linecap="square"/><path d="M968.84 340.6 L958.6 340.6 L958.6 353.4 L968.84 353.4M958.6 347 L965.38 347M982.55 343.03 L981.79 340.6 L973.6 340.6 L972.32 342.26 L972.32 351.74 L973.6 353.4 L981.79 353.4 L982.55 350.97M996.27 343.03 L995.5 340.6 L987.31 340.6 L986.03 342.26 L986.03 351.74 L987.31 353.4 L995.5 353.4 L996.27 350.97M1001.03 340.6 L1008.71 340.6 L1009.99 341.88 L1009.99 345.72 L1008.71 347 L1001.03 347 L999.75 345.72 L999.75 341.88 L1001.03 340.6M1001.03 347 L999.75 348.28 L999.75 352.12 L1001.03 353.4 L1008.71 353.4 L1009.99 352.12 L1009.99 348.28 L1008.71 347M1014.74 340.6 L1022.42 340.6 L1023.7 341.88 L1023.7 345.72 L1022.42 347 L1014.74 347 L1013.46 345.72 L1013.46 341.88 L1014.74 340.6M1014.74 347 L1013.46 348.28 L1013.46 352.12 L1014.74 353.4 L1022.42 353.4 L1023.7 352.12 L1023.7 348.28 L1022.42 347" stroke="#009CA2" stroke-width="1" fill="none" stroke-linejoin="round" stroke-linecap="square"/><path d="M870 384.5 L895 384.5 L882.5 396.5 L870 384.5 Z" stroke="#9E0000" stroke-width="1" fill="none"/><circle cx="982.5" cy="259.5" r="5" stroke="#9E0000" stroke-width="1.1" fill="none"/><line x1="982.5" y1="264.5" x2="982.5" y2="272.5" stroke="#9E0000" stroke-width="1" stroke-linecap="butt"/><line x1="982.5" y1="272.5" x2="1007.5" y2="272.5" stroke="#009E00" stroke-width="1" stroke-linecap="square"/><path d="M971.5 250.25 L977.82 250.25M974.66 247.48 L974.66 253.01M986.16 245.9 L979.84 245.9 L979.84 249.85 L985.37 249.85 L986.16 250.64 L986.16 253.01 L985.37 253.8 L979.84 253.8M988.18 245.9 L991.34 253.8 L994.5 245.9" stroke="#009CA2" stroke-width="1" fill="none" stroke-linejoin="round" stroke-linecap="square"/><line x1="1007.5" y1="147.5" x2="1007.5" y2="189.5" stroke="#9E0000" stroke-width="1" stroke-linecap="butt"/><line x1="1007.5" y1="204.5" x2="1007.5" y2="247.5" stroke="#9E0000" stroke-width="1" stroke-linecap="butt"/><line x1="981" y1="189.5" x2="1034" y2="189.5" stroke="#9E0000" stroke-width="3" stroke-linecap="butt"/><line x1="981" y1="204.5" x2="1034" y2="204.5" stroke="#9E0000" stroke-width="3" stroke-linecap="butt"/><circle cx="1007.5" cy="147.5" r="3" stroke="#9E0000" stroke-width="1" fill="none"/><circle cx="1007.5" cy="247.5" r="3" stroke="#9E0000" stroke-width="1" fill="none"/><path d="M1031.8 167.47 L1030.99 164.9 L1022.35 164.9 L1021 166.66 L1021 176.65 L1022.35 178.4 L1030.99 178.4 L1031.8 175.84M1033.61 167.6 L1035.63 164.9 L1041.97 164.9 L1044 167.19 L1044 169.49 L1039.01 172.19 L1039.01 174.89M1039.01 176.92 L1039.01 178.4" stroke="#009CA2" stroke-width="1" fill="none" stroke-linejoin="round" stroke-linecap="square"/><path d="M1031.5 217.97 L1030.71 215.5 L1022.31 215.5 L1021 217.19 L1021 226.81 L1022.31 228.5 L1030.71 228.5 L1031.5 226.03" stroke="#009CA2" stroke-width="1" fill="none" stroke-linejoin="round" stroke-linecap="square"/><line x1="1032.5" y1="122.5" x2="1032.5" y2="146" stroke="#9E0000" stroke-width="1" stroke-linecap="butt"/><path d="M1032.5 147.5 A11.8 12.5 0 0 1 1032.5 172.5 A11.8 12.5 0 0 1 1032.5 197.5 A11.8 12.5 0 0 1 1032.5 222.5 A11.8 12.5 0 0 1 1032.5 247.5" stroke="#9E0000" stroke-width="1.2" fill="none"/><rect x="1032" y="147" width="3.5" height="1" fill="#9E0000"/><rect x="1032" y="171" width="3.5" height="2" fill="#9E0000"/><rect x="1032" y="196" width="3.5" height="2" fill="#9E0000"/><rect x="1032" y="221" width="3.5" height="2" fill="#9E0000"/><rect x="1032" y="246" width="3.5" height="2" fill="#9E0000"/><line x1="1032.5" y1="247.5" x2="1032.5" y2="272.5" stroke="#9E0000" stroke-width="1" stroke-linecap="butt"/><circle cx="1032.5" cy="122.5" r="3" stroke="#9E0000" stroke-width="1" fill="none"/><circle cx="1032.5" cy="272.5" r="3" stroke="#9E0000" stroke-width="1" fill="none"/><path d="M1015.9 207 L1026.3 207 L1026.3 198.68M1017.98 197.01 L1015.9 195.45 L1015.9 190.56 L1017.67 189 L1019.44 189 L1021.52 192.85 L1023.6 192.85M1025.16 192.85 L1026.3 192.85" stroke="#009CA2" stroke-width="1" fill="none" stroke-linejoin="round" stroke-linecap="square"/><path d="M1052.5 239.1 L1052.5 233.85M1052.5 236.47 L1063 236.47M1063 239.1 L1063 233.85M1063 231.06 L1052.5 231.06 L1063 222.66 L1052.5 222.66M1052.5 219.86 L1063 219.86 L1063 213.56 L1060.9 211.46 L1054.6 211.46 L1052.5 213.56 L1052.5 219.86M1052.5 208.67 L1061.95 208.67 L1063 207.62 L1063 201.32 L1061.95 200.27 L1052.5 200.27M1054.49 189.08 L1052.5 189.71 L1052.5 196.43 L1053.87 197.48 L1061.63 197.48 L1063 196.43 L1063 189.71 L1061.01 189.08M1052.5 186.29 L1052.5 177.89M1052.5 182.09 L1063 182.09M1052.5 174.04 L1052.5 167.74 L1053.55 166.69 L1061.95 166.69 L1063 167.74 L1063 174.04 L1061.95 175.09 L1053.55 175.09 L1052.5 174.04M1063 163.9 L1052.5 163.9 L1052.5 157.07 L1054.08 155.5 L1056.7 155.5 L1058.07 156.76 L1058.07 163.9M1058.07 159.91 L1063 155.5" stroke="#009CA2" stroke-width="1" fill="none" stroke-linejoin="round" stroke-linecap="square"/><line x1="1082.5" y1="122.5" x2="1082.5" y2="146" stroke="#9E0000" stroke-width="1" stroke-linecap="butt"/><path d="M1082.5 147.5 A11.8 12.5 0 0 1 1082.5 172.5 A11.8 12.5 0 0 1 1082.5 197.5 A11.8 12.5 0 0 1 1082.5 222.5 A11.8 12.5 0 0 1 1082.5 247.5" stroke="#9E0000" stroke-width="1.2" fill="none"/><rect x="1082" y="147" width="3.5" height="1" fill="#9E0000"/><rect x="1082" y="171" width="3.5" height="2" fill="#9E0000"/><rect x="1082" y="196" width="3.5" height="2" fill="#9E0000"/><rect x="1082" y="221" width="3.5" height="2" fill="#9E0000"/><rect x="1082" y="246" width="3.5" height="2" fill="#9E0000"/><line x1="1082.5" y1="247.5" x2="1082.5" y2="272.5" stroke="#9E0000" stroke-width="1" stroke-linecap="butt"/><circle cx="1082.5" cy="122.5" r="3" stroke="#9E0000" stroke-width="1" fill="none"/><circle cx="1082.5" cy="272.5" r="3" stroke="#9E0000" stroke-width="1" fill="none"/><path d="M1065.3 207 L1076.5 207 L1076.5 198.04M1067.54 200.12 L1065.3 198.44 L1065.3 193.18 L1067.2 191.5 L1069.11 191.5 L1071.35 195.64 L1073.59 195.64M1075.27 195.64 L1076.5 195.64" stroke="#009CA2" stroke-width="1" fill="none" stroke-linejoin="round" stroke-linecap="square"/><path d="M1103.3 239.1 L1103.3 233.9M1103.3 236.5 L1113.7 236.5M1113.7 239.1 L1113.7 233.9M1113.7 231.02 L1103.3 231.02 L1113.7 222.7 L1103.3 222.7M1103.3 219.82 L1113.7 219.82 L1113.7 213.58 L1111.62 211.5 L1105.38 211.5 L1103.3 213.58 L1103.3 219.82M1103.3 208.62 L1112.66 208.62 L1113.7 207.58 L1113.7 201.34 L1112.66 200.3 L1103.3 200.3M1105.28 189.1 L1103.3 189.72 L1103.3 196.38 L1104.65 197.42 L1112.35 197.42 L1113.7 196.38 L1113.7 189.72 L1111.72 189.1M1103.3 186.22 L1103.3 177.9M1103.3 182.06 L1113.7 182.06M1103.3 173.98 L1103.3 167.74 L1104.34 166.7 L1112.66 166.7 L1113.7 167.74 L1113.7 173.98 L1112.66 175.02 L1104.34 175.02 L1103.3 173.98M1113.7 163.82 L1103.3 163.82 L1103.3 157.06 L1104.86 155.5 L1107.46 155.5 L1108.81 156.75 L1108.81 163.82M1108.81 159.87 L1113.7 155.5" stroke="#009CA2" stroke-width="1" fill="none" stroke-linejoin="round" stroke-linecap="square"/><path d="M1070 284.5 L1095 284.5 L1082.5 296.5 L1070 284.5 Z" stroke="#9E0000" stroke-width="1" fill="none"/><line x1="1082.5" y1="272.5" x2="1082.5" y2="284.5" stroke="#009E00" stroke-width="1" stroke-linecap="square"/><line x1="1145.5" y1="147.5" x2="1145.5" y2="189.5" stroke="#9E0000" stroke-width="1" stroke-linecap="butt"/><line x1="1145.5" y1="204.5" x2="1145.5" y2="247.5" stroke="#9E0000" stroke-width="1" stroke-linecap="butt"/><line x1="1119" y1="189.5" x2="1172" y2="189.5" stroke="#9E0000" stroke-width="3" stroke-linecap="butt"/><line x1="1119" y1="204.5" x2="1172" y2="204.5" stroke="#9E0000" stroke-width="3" stroke-linecap="butt"/><circle cx="1145.5" cy="147.5" r="3" stroke="#9E0000" stroke-width="1" fill="none"/><circle cx="1145.5" cy="247.5" r="3" stroke="#9E0000" stroke-width="1" fill="none"/><path d="M1167.9 167.97 L1167.12 165.5 L1158.8 165.5 L1157.5 167.19 L1157.5 176.81 L1158.8 178.5 L1167.12 178.5 L1167.9 176.03M1170.49 168.1 L1172.44 165.5 L1178.55 165.5 L1180.5 167.71 L1180.5 169.92 L1175.69 172.52 L1175.69 175.12M1175.69 177.07 L1175.69 178.5" stroke="#009CA2" stroke-width="1" fill="none" stroke-linejoin="round" stroke-linecap="square"/><path d="M1168.1 217.97 L1167.3 215.5 L1158.83 215.5 L1157.5 217.19 L1157.5 226.81 L1158.83 228.5 L1167.3 228.5 L1168.1 226.03" stroke="#009CA2" stroke-width="1" fill="none" stroke-linejoin="round" stroke-linecap="square"/><line x1="545.5" y1="397.5" x2="570" y2="397.5" stroke="#9E0000" stroke-width="1" stroke-linecap="butt"/><line x1="644" y1="397.5" x2="670.5" y2="397.5" stroke="#9E0000" stroke-width="1" stroke-linecap="butt"/><rect x="570" y="387" width="74" height="19" fill="none" stroke="#9E0000" stroke-width="2"/><path d="M602.1 403.5 L602.1 390.5 L610.14 390.5 L612 392.45 L612 395.7 L610.51 397.39 L602.1 397.39M606.8 397.39 L612 403.5" stroke="#009CA2" stroke-width="1" fill="none" stroke-linejoin="round" stroke-linecap="square"/><path d="M595.5 423.5 L595.5 410.5 L603.95 410.5 L605.9 412.45 L605.9 415.7 L604.34 417.39 L595.5 417.39M600.44 417.39 L605.9 423.5M607.99 413.1 L609.94 410.5 L616.05 410.5 L618 412.71 L618 414.92 L613.19 417.52 L613.19 420.12M613.19 422.07 L613.19 423.5" stroke="#009CA2" stroke-width="1" fill="none" stroke-linejoin="round" stroke-linecap="square"/><path d="M670.5 377 L662 385.5 L679 385.5 Z" stroke="#9E0000" stroke-width="0.5" fill="#9E0000"/><line x1="670.5" y1="385.5" x2="670.5" y2="397.5" stroke="#9E0000" stroke-width="1" stroke-linecap="butt"/><circle cx="545.5" cy="397.5" r="3" stroke="#9E0000" stroke-width="1" fill="none"/><circle cx="670.5" cy="397.5" r="3" stroke="#9E0000" stroke-width="1" fill="none"/><path d="M658.2 372.75 L663.08 372.75M660.64 370.62 L660.64 374.89M671.79 369.4 L666.91 369.4 L666.91 372.45 L671.18 372.45 L671.79 373.06 L671.79 374.89 L671.18 375.5 L666.91 375.5M675.62 375.5 L675.62 369.4 L679.89 369.4 L680.5 370.01 L680.5 371.84 L679.89 372.45 L675.62 372.45" stroke="#009CA2" stroke-width="1" fill="none" stroke-linejoin="round" stroke-linecap="square"/><circle cx="795.5" cy="372.5" r="3" stroke="#9E0000" stroke-width="1" fill="none"/><circle cx="545.5" cy="434.5" r="3" stroke="#9E0000" stroke-width="1" fill="none"/><line x1="545.5" y1="434.5" x2="545.5" y2="484.5" stroke="#9E0000" stroke-width="1" stroke-linecap="butt"/><line x1="519.5" y1="484.5" x2="571.5" y2="484.5" stroke="#9E0000" stroke-width="3" stroke-linecap="butt"/><path d="M495.5 567 L495.5 502.5 A50.6 50.6 0 0 1 595.5 502.5 L595.5 567 A50.6 50.6 0 0 1 495.5 567" stroke="#9E0000" stroke-width="1.1" fill="none"/><line x1="470.5" y1="534.5" x2="514" y2="534.5" stroke="#9E0000" stroke-width="1" stroke-linecap="butt"/><line x1="514" y1="534" x2="526.5" y2="534" stroke="#9E0000" stroke-width="2" stroke-linecap="butt"/><line x1="538" y1="534" x2="552" y2="534" stroke="#9E0000" stroke-width="2" stroke-linecap="butt"/><line x1="563.5" y1="534" x2="576.5" y2="534" stroke="#9E0000" stroke-width="2" stroke-linecap="butt"/><circle cx="545.5" cy="434.5" r="3" stroke="#9E0000" stroke-width="1" fill="none"/><circle cx="470.5" cy="534.5" r="3" stroke="#9E0000" stroke-width="1" fill="none"/><path d="M520.5 585 A25.6 25.6 0 0 1 570.5 585" stroke="#9E0000" stroke-width="2.6" fill="none"/><line x1="520.5" y1="584.5" x2="520.5" y2="634.5" stroke="#9E0000" stroke-width="1" stroke-linecap="butt"/><circle cx="520.5" cy="634.5" r="3" stroke="#9E0000" stroke-width="1" fill="none"/><path d="M542 451.8 L535.17 451.8 L532.9 449.11 L532.9 445.89 L535.17 443.2 L542 443.2M537.9 451.8 L537.9 443.2" stroke="#009CA2" stroke-width="1" fill="none" stroke-linejoin="round" stroke-linecap="square"/><path d="M549.92 448.42 L548.1 446.85 L557.2 446.85M557.2 448.81 L557.2 444.89" stroke="#9E0000" stroke-width="1" fill="none" stroke-linejoin="round" stroke-linecap="square"/><path d="M555.2 450.8 L555.2 462.41 L556.49 463.7 L564.23 463.7 L565.52 462.41 L565.52 450.8M569.78 453.38 L571.71 450.8 L577.77 450.8 L579.71 452.99 L579.71 455.19 L574.94 457.77 L574.94 460.35M574.94 462.28 L574.94 463.7M583.58 463.7 L583.58 454.02 L586.8 450.8 L590.67 450.8 L593.9 454.02 L593.9 463.7M583.58 457.89 L593.9 457.89" stroke="#009CA2" stroke-width="1" fill="none" stroke-linejoin="round" stroke-linecap="square"/><path d="M485.8 524.54 L485.8 522.9 L479.41 522.9 L478.5 524.08 L478.5 530.82 L479.41 532 L485.8 532 L485.8 527.9 L482.61 527.9" stroke="#009CA2" stroke-width="1" fill="none" stroke-linejoin="round" stroke-linecap="square"/><path d="M485.8 538.1 L479.41 538.1 L478.5 539.28 L478.5 546.02 L479.41 547.2 L484.89 547.2 L485.8 546.29 L485.8 543.74 L484.89 542.83 L478.5 542.83" stroke="#9E0000" stroke-width="1" fill="none" stroke-linejoin="round" stroke-linecap="square"/><path d="M507.5 627 L516.5 627M507.5 619.1 L513.35 627M511.37 624.24 L516.5 619.1" stroke="#009CA2" stroke-width="1" fill="none" stroke-linejoin="round" stroke-linecap="square"/><path d="M522.5 626.7 L522.5 618.9 L523.7 618.9 L532.5 625.24" stroke="#9E0000" stroke-width="1" fill="none" stroke-linejoin="round" stroke-linecap="square"/><path d="M570.5 609 L561.3 609 L561.3 620.5 L570.5 620.5M561.3 614.75 L567.39 614.75M584.63 611.18 L583.94 609 L576.58 609 L575.43 610.5 L575.43 619 L576.58 620.5 L583.94 620.5 L584.63 618.32M590.72 609 L597.62 609 L598.77 610.15 L598.77 613.6 L597.62 614.75 L590.72 614.75 L589.57 613.6 L589.57 610.15 L590.72 609M590.72 614.75 L589.57 615.9 L589.57 619.35 L590.72 620.5 L597.62 620.5 L598.77 619.35 L598.77 615.9 L597.62 614.75M612.9 609 L604.85 609 L603.7 610.5 L603.7 619 L604.85 620.5 L611.75 620.5 L612.9 619.35 L612.9 616.13 L611.75 614.98 L603.7 614.98" stroke="#009CA2" stroke-width="1" fill="none" stroke-linejoin="round" stroke-linecap="square"/><line x1="382.5" y1="559.5" x2="382.5" y2="601.5" stroke="#9E0000" stroke-width="1" stroke-linecap="butt"/><line x1="382.5" y1="616.5" x2="382.5" y2="659.5" stroke="#9E0000" stroke-width="1" stroke-linecap="butt"/><line x1="356" y1="601.5" x2="409" y2="601.5" stroke="#9E0000" stroke-width="3" stroke-linecap="butt"/><line x1="356" y1="616.5" x2="409" y2="616.5" stroke="#9E0000" stroke-width="3" stroke-linecap="butt"/><circle cx="382.5" cy="559.5" r="3" stroke="#9E0000" stroke-width="1" fill="none"/><circle cx="382.5" cy="659.5" r="3" stroke="#9E0000" stroke-width="1" fill="none"/><line x1="360" y1="632" x2="402.5" y2="589" stroke="#9E0000" stroke-width="3.5" stroke-linecap="butt"/><path d="M407.5 584 L394.5 584 L407.5 596 Z" stroke="#9E0000" stroke-width="0.5" fill="#9E0000"/><path d="M372.72 582.08 L370.9 580.25 L380 580.25M380 582.54 L380 577.96" stroke="#9E0000" stroke-width="1" fill="none" stroke-linejoin="round" stroke-linecap="square"/><path d="M371.93 642.2 L370.5 641.01 L370.5 635.29 L371.45 634.3 L374.3 634.3 L375.25 635.29 L375.25 641.21 L376.2 642.2 L380 642.2 L380 634.3" stroke="#9E0000" stroke-width="1" fill="none" stroke-linejoin="round" stroke-linecap="square"/><path d="M410.74 626.16 L410.12 624.2 L403.53 624.2 L402.5 625.54 L402.5 633.16 L403.53 634.5 L410.12 634.5 L410.74 632.54M416.37 626.26 L417.91 624.2 L422.75 624.2 L424.3 625.95 L424.3 627.7 L420.49 629.76 L420.49 631.82M420.49 633.37 L420.49 634.5" stroke="#009CA2" stroke-width="1" fill="none" stroke-linejoin="round" stroke-linecap="square"/><path d="M396.58 646.1 L395.88 643.9 L388.46 643.9 L387.3 645.41 L387.3 653.99 L388.46 655.5 L395.88 655.5 L396.58 653.3M402.4 643.9 L411.68 643.9M407.04 643.9 L407.04 655.5M417.5 655.5 L417.5 643.9 L425.04 643.9 L426.78 645.64 L426.78 648.54 L425.39 650.05 L417.5 650.05M421.91 650.05 L426.78 655.5M432.6 643.9 L438.4 643.9M435.5 643.9 L435.5 655.5M432.6 655.5 L438.4 655.5M444.22 655.5 L444.22 643.9 L448.86 650.28 L453.5 643.9 L453.5 655.5" stroke="#009CA2" stroke-width="1" fill="none" stroke-linejoin="round" stroke-linecap="square"/><path d="M370 697 L395 697 L382.5 709 L370 697 Z" stroke="#9E0000" stroke-width="1" fill="none"/><line x1="382.5" y1="684.5" x2="382.5" y2="697" stroke="#009E00" stroke-width="1" stroke-linecap="butt"/><line x1="470.5" y1="534.5" x2="470.5" y2="558" stroke="#9E0000" stroke-width="1" stroke-linecap="butt"/><path d="M470.5 559.5 A11.8 12.5 0 0 1 470.5 584.5 A11.8 12.5 0 0 1 470.5 609.5 A11.8 12.5 0 0 1 470.5 634.5 A11.8 12.5 0 0 1 470.5 659.5" stroke="#9E0000" stroke-width="1.2" fill="none"/><rect x="470" y="559" width="3.5" height="1" fill="#9E0000"/><rect x="470" y="583" width="3.5" height="2" fill="#9E0000"/><rect x="470" y="608" width="3.5" height="2" fill="#9E0000"/><rect x="470" y="633" width="3.5" height="2" fill="#9E0000"/><rect x="470" y="658" width="3.5" height="2" fill="#9E0000"/><line x1="470.5" y1="659.5" x2="470.5" y2="684.5" stroke="#9E0000" stroke-width="1" stroke-linecap="butt"/><circle cx="470.5" cy="534.5" r="3" stroke="#9E0000" stroke-width="1" fill="none"/><circle cx="470.5" cy="684.5" r="3" stroke="#9E0000" stroke-width="1" fill="none"/><path d="M453.2 619.4 L463.5 619.4 L463.5 611.16M455.26 609.43 L453.2 607.89 L453.2 603.04 L454.95 601.5 L456.7 601.5 L458.76 605.31 L460.82 605.31M462.37 605.31 L463.5 605.31" stroke="#009CA2" stroke-width="1" fill="none" stroke-linejoin="round" stroke-linecap="square"/><path d="M491.5 651.5 L491.5 647M491.5 649.25 L500.5 649.25M500.5 651.5 L500.5 647M500.5 642.8 L491.5 642.8 L500.5 635.6 L491.5 635.6M491.5 631.4 L500.5 631.4 L500.5 626 L498.7 624.2 L493.3 624.2 L491.5 626 L491.5 631.4M491.5 620 L499.6 620 L500.5 619.1 L500.5 613.7 L499.6 612.8 L491.5 612.8M493.21 601.4 L491.5 601.94 L491.5 607.7 L492.67 608.6 L499.33 608.6 L500.5 607.7 L500.5 601.94 L498.79 601.4M491.5 597.2 L491.5 590M491.5 593.6 L500.5 593.6M491.5 584.9 L491.5 579.5 L492.4 578.6 L499.6 578.6 L500.5 579.5 L500.5 584.9 L499.6 585.8 L492.4 585.8 L491.5 584.9M500.5 574.4 L491.5 574.4 L491.5 568.55 L492.85 567.2 L495.1 567.2 L496.27 568.28 L496.27 574.4M496.27 570.98 L500.5 567.2" stroke="#009CA2" stroke-width="1" fill="none" stroke-linejoin="round" stroke-linecap="square"/><line x1="470.5" y1="684.5" x2="470.5" y2="708" stroke="#9E0000" stroke-width="1" stroke-linecap="butt"/><path d="M470.5 709.5 A11.8 12.5 0 0 1 470.5 734.5 A11.8 12.5 0 0 1 470.5 759.5 A11.8 12.5 0 0 1 470.5 784.5 A11.8 12.5 0 0 1 470.5 809.5" stroke="#9E0000" stroke-width="1.2" fill="none"/><rect x="470" y="709" width="3.5" height="1" fill="#9E0000"/><rect x="470" y="733" width="3.5" height="2" fill="#9E0000"/><rect x="470" y="758" width="3.5" height="2" fill="#9E0000"/><rect x="470" y="783" width="3.5" height="2" fill="#9E0000"/><rect x="470" y="808" width="3.5" height="2" fill="#9E0000"/><line x1="470.5" y1="809.5" x2="470.5" y2="834.5" stroke="#9E0000" stroke-width="1" stroke-linecap="butt"/><circle cx="470.5" cy="684.5" r="3" stroke="#9E0000" stroke-width="1" fill="none"/><circle cx="470.5" cy="834.5" r="3" stroke="#9E0000" stroke-width="1" fill="none"/><path d="M453.1 770.2 L462.5 770.2 L462.5 762.68M454.98 758.54 L453.1 757.13 L453.1 752.71 L454.7 751.3 L456.3 751.3 L458.18 754.78 L460.06 754.78M461.47 754.78 L462.5 754.78" stroke="#009CA2" stroke-width="1" fill="none" stroke-linejoin="round" stroke-linecap="square"/><path d="M490.5 801.3 L490.5 796.15M490.5 798.72 L500.8 798.72M500.8 801.3 L500.8 796.15M500.8 793.08 L490.5 793.08 L500.8 784.84 L490.5 784.84M490.5 781.78 L500.8 781.78 L500.8 775.6 L498.74 773.54 L492.56 773.54 L490.5 775.6 L490.5 781.78M490.5 770.47 L499.77 770.47 L500.8 769.44 L500.8 763.26 L499.77 762.23 L490.5 762.23M492.46 750.92 L490.5 751.54 L490.5 758.13 L491.84 759.16 L499.46 759.16 L500.8 758.13 L500.8 751.54 L498.84 750.92M490.5 747.85 L490.5 739.61M490.5 743.73 L500.8 743.73M490.5 735.52 L490.5 729.34 L491.53 728.31 L499.77 728.31 L500.8 729.34 L500.8 735.52 L499.77 736.55 L491.53 736.55 L490.5 735.52M500.8 725.24 L490.5 725.24 L490.5 718.54 L492.05 717 L494.62 717 L495.96 718.24 L495.96 725.24M495.96 721.33 L500.8 717" stroke="#009CA2" stroke-width="1" fill="none" stroke-linejoin="round" stroke-linecap="square"/><rect x="1008" y="584" width="12" height="1" fill="#000"/><rect x="1021" y="584" width="11" height="1" fill="#000"/><rect x="1020" y="572" width="1" height="12" fill="#000"/><rect x="1020" y="585" width="1" height="11" fill="#000"/><circle cx="695.5" cy="272.5" r="3" stroke="#9E0000" stroke-width="1" fill="none"/><circle cx="795.5" cy="272.5" r="3" stroke="#9E0000" stroke-width="1" fill="none"/></svg>
<div id="vscroll" class="abs"></div>
<div class="sbtnv" style="left:1227px;top:58px;width:15px;height:15px"></div>
<svg class="abs" style="left:1227px;top:58px" width="15" height="15"><path d="M4 9L7.5 5.5L11 9" stroke="#222" stroke-width="1.6" fill="none"/></svg>
<div class="sbtn" style="left:1227px;top:216px;width:15px;height:142px"></div>
<svg class="abs" style="left:1227px;top:216px" width="15" height="142"><path d="M5 66H10M5 69H10M5 72H10" stroke="#6E665E" stroke-width="1"/></svg>
<div class="sbtnv" style="left:1227px;top:865px;width:15px;height:15px"></div>
<svg class="abs" style="left:1227px;top:865px" width="15" height="15"><path d="M4 6L7.5 9.5L11 6" stroke="#222" stroke-width="1.6" fill="none"/></svg>
<div id="hscroll" class="abs"></div>
<div class="sbtn" style="left:32px;top:880px;width:15px;height:15px"></div>
<svg class="abs" style="left:32px;top:880px" width="15" height="15"><path d="M9 4L5.5 7.5L9 11" stroke="#222" stroke-width="1.6" fill="none"/></svg>
<div class="sbtnv" style="left:202px;top:880px;width:215px;height:15px"></div>
<svg class="abs" style="left:202px;top:880px" width="215" height="15"><path d="M104 5V10M107 5V10M110 5V10" stroke="#6E665E" stroke-width="1"/></svg>
<div class="sbtn" style="left:1212px;top:880px;width:15px;height:15px"></div>
<svg class="abs" style="left:1212px;top:880px" width="15" height="15"><path d="M6 4L9.5 7.5L6 11" stroke="#222" stroke-width="1.6" fill="none"/></svg>
<div id="band" class="abs"></div>
<div id="status" class="abs">
 <div class="fld" style="left:2px;width:780px;letter-spacing:0.7px">Bibliothek/usr/share/kicad/library/valves.lib geladen</div>
 <div class="fld" style="left:786px;width:57px">Z 4</div>
 <div class="fld" style="left:846px;width:137px;letter-spacing:0.25px">X 5,0000&nbsp; Y 3,7000</div>
 <div class="fld" style="left:986px;width:137px;letter-spacing:0.4px">x -0,8500&nbsp; y -0,4330</div>
 <div class="fld" style="left:1126px;width:47px;letter-spacing:0.4px">Zoll</div>
 <div class="fld" style="left:1176px;width:98px;letter-spacing:0.7px">Elektr. Verbin</div>
 <svg class="abs" style="left:1258px;top:17px" width="14" height="6"><path d="M1 4.5H2M4 4.5H5M7 4.5H8M10 4.5H11M4 1.5H5M7 1.5H8M10 1.5H11" stroke="#A8A096" stroke-width="1"/></svg>
</div>
<svg class="abs" style="left:8px;top:33px" width="16" height="16" viewBox="0 0 16 16"><defs><linearGradient id="pg" x1="0" y1="0" x2="1" y2="1"><stop offset="0" stop-color="#F4F4F4"/><stop offset="1" stop-color="#E0E0E0"/></linearGradient></defs><path d="M1.2 1.2H11L14.8 5V14.8H1.2Z" fill="url(#pg)" stroke="#000" stroke-width="1.4" stroke-linejoin="round"/><path d="M11 1.2V5H14.8Z" fill="#fff" stroke="#000" stroke-width="0.8"/></svg><svg class="abs" style="left:36px;top:33px" width="16" height="16" viewBox="0 0 16 16"><path d="M1.5 3.5L3 2H7L8.5 3.5H14.5L15.5 7.5L13 13.5H1.5Z" fill="#B5B893" stroke="#000"/><path d="M3.5 7.5H15.5L13 13.5H1.5Z" fill="#D0D3AE" stroke="#000"/></svg><svg class="abs" style="left:64px;top:33px" width="16" height="16" viewBox="0 0 16 16"><path d="M8.5 0.5H14L15.5 2V11.5H8.5Z" fill="#fff" stroke="#000"/><path d="M5.5 2.5H11L12.5 4V13.5H5.5Z" fill="#fff" stroke="#000"/><rect x="0" y="5" width="9" height="11" fill="#7E9CB8"/><rect x="0" y="5" width="8" height="2" fill="#D86A5A"/><rect x="0" y="8" width="7" height="4" fill="#F2F2F2"/></svg><svg class="abs" style="left:104px;top:33px" width="16" height="16" viewBox="0 0 16 16"><path d="M1.5 0.5H12L14.5 3V15.5H1.5Z" fill="#fff" stroke="#000"/><path d="M5 1V15M2 7H14" stroke="#0000FF" stroke-width="1.2"/><path d="M5 1L3.5 3H6.5ZM5 15L3.5 13H6.5ZM2 7L4 5.5V8.5ZM14 7L12 5.5V8.5Z" fill="#0000FF"/><rect x="8" y="11" width="5" height="2.5" fill="#000"/></svg><svg class="abs" style="left:144px;top:33px" width="16" height="16" viewBox="0 0 16 16"><path d="M0 5.8L5.8 0.3L8.2 0.6L10.3 5.2H15.5V8.8L11.5 14.5L5.8 13.6Z" fill="#D8D8D8" stroke="#000" stroke-width="1.3" stroke-linejoin="round"/><path d="M7 1.8L10 6.3H14.5V8.6L11 13.3L7.5 12.6Z" fill="#F6F6F6"/><path d="M2.5 6L6.5 2.5M3.5 7.5L7.5 4" stroke="#BBB" stroke-width="0.6"/></svg><svg class="abs" style="left:172px;top:33px" width="16" height="16" viewBox="0 0 16 16"><path d="M0 5.8L5.8 0.3L8.2 0.6L10.3 5.2H15.5V8.8L11.5 14.5L5.8 13.6Z" fill="#D8D8D8" stroke="#000" stroke-width="1.3" stroke-linejoin="round"/><path d="M7 1.8L10 6.3H14.5V8.6L11 13.3L7.5 12.6Z" fill="#F6F6F6"/><path d="M2.5 6L6.5 2.5M3.5 7.5L7.5 4" stroke="#BBB" stroke-width="0.6"/><circle cx="9.3" cy="8.8" r="3.3" fill="#FDFDFD" stroke="#333" stroke-width="1.2"/><path d="M11.8 11.5L15 15" stroke="#000" stroke-width="2.2"/></svg><svg class="abs" style="left:212px;top:33px" width="16" height="16" viewBox="0 0 16 16"><path d="M3 3V9.5H8M5.5 6V12.5H8" stroke="#444" fill="none" stroke-width="0.9"/><rect x="1" y="0.5" width="8" height="3" fill="#D37FD8" stroke="#222"/><rect x="4" y="4" width="8" height="3" fill="#70C8CC" stroke="#222"/><rect x="7" y="8" width="8.5" height="3" fill="#77CC66" stroke="#222"/><rect x="7" y="12" width="8.5" height="3" fill="#77CC66" stroke="#222"/></svg><svg class="abs" style="left:251px;top:33px" width="16" height="16" viewBox="0 0 16 16"><path d="M5 1L9 10M11 1L7 10" stroke="#B8B4AE" stroke-width="1.1"/><circle cx="5.5" cy="12.5" r="2.3" fill="none" stroke="#B8B4AE" stroke-width="1.1"/><circle cx="10.5" cy="12.5" r="2.3" fill="none" stroke="#B8B4AE" stroke-width="1.1"/></svg><svg class="abs" style="left:279px;top:33px" width="16" height="16" viewBox="0 0 16 16"><path d="M1.5 1.5H7L8.5 3V10.5H1.5Z" fill="#F4F2F0" stroke="#B8B4AE"/><path d="M7.5 5.5H13L14.5 7V14.5H7.5Z" fill="#F4F2F0" stroke="#B8B4AE"/><path d="M3 5H6M3 7H6M9 9H13M9 11H13" stroke="#B8B4AE" stroke-width="0.8"/></svg><svg class="abs" style="left:307px;top:33px" width="16" height="16" viewBox="0 0 16 16"><rect x="1.5" y="2.5" width="9" height="13" rx="1" fill="#DAD6D0" stroke="#B8B4AE"/><rect x="4" y="0.5" width="4" height="3" fill="#DAD6D0" stroke="#B8B4AE"/><path d="M7.5 5.5H15.5V15.5H7.5Z" fill="#F4F2F0" stroke="#B8B4AE"/><path d="M9 8H14M9 10H14M9 12H14" stroke="#B8B4AE" stroke-width="0.8"/></svg><svg class="abs" style="left:347px;top:33px" width="16" height="16" viewBox="0 0 16 16"><path d="M1 6.5L6 1.5V4.5H9C12.5 4.5 14.5 7 14.5 10C14.5 12.5 13 14.5 11.5 15.5H9.5C11 14 12 12.5 12 10.5C12 8.5 10.5 8 9 8H6V11.5Z" fill="#F5E85A" stroke="#9A8A00" stroke-width="0.9"/></svg><svg class="abs" style="left:375px;top:33px" width="16" height="16" viewBox="0 0 16 16"><path d="M15 6.5L10 1.5V4.5H7C3.5 4.5 1.5 7 1.5 10C1.5 12.5 3 14.5 4.5 15.5H6.5C5 14 4 12.5 4 10.5C4 8.5 5.5 8 7 8H10V11.5Z" fill="#ECEAE6" stroke="#C8C4BE" stroke-width="0.9"/></svg><svg class="abs" style="left:416px;top:33px" width="16" height="16" viewBox="0 0 16 16"><path d="M4.5 0.5H11.5L13 3V6H3V2Z" fill="#fff" stroke="#000"/><rect x="0.7" y="5.7" width="14.6" height="7.6" rx="2" fill="#fff" stroke="#000" stroke-width="1.4"/><rect x="1" y="9" width="14" height="1.6" fill="#000"/><rect x="7" y="9.2" width="3" height="1.2" fill="#E8D800"/><path d="M3 13.5H13" stroke="#000" stroke-width="1.5"/></svg><svg class="abs" style="left:455px;top:33px" width="16" height="16" viewBox="0 0 16 16"><path d="M1 1L9 8L1 15Z" fill="#F7A040"/><path d="M1 1V15" stroke="#000" stroke-width="1.4"/><rect x="10" y="0.5" width="3" height="3" fill="#F08020"/><rect x="10" y="12.5" width="3" height="3" fill="#F08020"/><path d="M13 3H15V6M13 13H15V10M10 6H11M10 10H11" stroke="#000" stroke-width="1"/></svg><svg class="abs" style="left:483px;top:33px" width="16" height="16" viewBox="0 0 16 16"><rect x="0.7" y="0.7" width="14.6" height="14.6" fill="#fff" stroke="#000" stroke-width="1.4"/><path d="M3 4H13M3 8H13M3 12H13" stroke="#F07020" stroke-width="1.2"/><circle cx="4" cy="4" r="1.3" fill="#fff" stroke="#F07020"/><circle cx="11" cy="8" r="1.3" fill="#fff" stroke="#F07020"/><circle cx="11" cy="12" r="1.3" fill="#fff" stroke="#F07020"/></svg><svg class="abs" style="left:524px;top:33px" width="16" height="16" viewBox="0 0 16 16"><circle cx="7" cy="7" r="6" fill="#C9D8EA" stroke="#8C8C8C" stroke-width="1.6"/><circle cx="7" cy="7" r="4" fill="#A9C3E6"/><path d="M11 11L15 15" stroke="#707070" stroke-width="2.6"/><path d="M7 4.2V9.8M4.2 7H9.8" stroke="#fff" stroke-width="2.2"/></svg><svg class="abs" style="left:552px;top:33px" width="16" height="16" viewBox="0 0 16 16"><circle cx="7" cy="7" r="6" fill="#C9D8EA" stroke="#8C8C8C" stroke-width="1.6"/><circle cx="7" cy="7" r="4" fill="#A9C3E6"/><path d="M11 11L15 15" stroke="#707070" stroke-width="2.6"/><path d="M4.2 7H9.8" stroke="#fff" stroke-width="2.2"/></svg><svg class="abs" style="left:580px;top:33px" width="16" height="16" viewBox="0 0 16 16"><rect x="0.5" y="0.5" width="15" height="15" rx="3" fill="#2A5A9A"/><path d="M3 8A5 5 0 0 1 12 5M13 8A5 5 0 0 1 4 11" stroke="#DDE8F5" stroke-width="1.6" fill="none"/><path d="M12 2V6H8M4 14V10H8" stroke="#DDE8F5" stroke-width="1.3" fill="none"/></svg><svg class="abs" style="left:608px;top:33px" width="16" height="16" viewBox="0 0 16 16"><circle cx="7" cy="7" r="6" fill="#C9D8EA" stroke="#8C8C8C" stroke-width="1.6"/><circle cx="7" cy="7" r="4" fill="#A9C3E6"/><path d="M11 11L15 15" stroke="#707070" stroke-width="2.6"/><path d="M5 5L9 9M9 5L5 9" stroke="#E4EDF8" stroke-width="1.2"/></svg><svg class="abs" style="left:648px;top:33px" width="16" height="16" viewBox="0 0 16 16"><path d="M2 4H6V15H1V8ZM10 4H14L15 8V15H10Z" fill="#2B2B2B"/><rect x="3" y="0.5" width="3" height="4" fill="#555"/><rect x="10" y="0.5" width="3" height="4" fill="#555"/><path d="M3.5 6V12M12 6V12" stroke="#3050E0" stroke-width="1.6"/><rect x="6" y="8" width="4" height="3" fill="#444"/></svg><svg class="abs" style="left:688px;top:33px" width="16" height="16" viewBox="0 0 16 16"><rect x="0.7" y="0.7" width="14.6" height="14.6" fill="#fff" stroke="#000" stroke-width="1.4"/><path d="M3 2V14M13 2V14" stroke="#5A6A7A" stroke-dasharray="1 1"/><path d="M5 3H11L8 7Z" fill="#F07020"/><rect x="5" y="7" width="6" height="6" fill="#F0B080"/><rect x="6" y="9" width="4" height="3" fill="#F07020"/></svg><svg class="abs" style="left:716px;top:33px" width="16" height="16" viewBox="0 0 16 16"><path d="M1 5L8 9.5L1 14Z" fill="#C8DCF0" stroke="#000" stroke-width="1"/><circle cx="11" cy="12" r="3.8" fill="#555"/><circle cx="11" cy="12" r="1.5" fill="#C8C8C8"/><text x="8" y="6" font-family="Liberation Sans" font-size="7" font-weight="bold" fill="#000">U?</text></svg><svg class="abs" style="left:744px;top:33px" width="16" height="16" viewBox="0 0 16 16"><circle cx="5.5" cy="6" r="5" fill="#F4F4F4" stroke="#000" stroke-width="1.3"/><path d="M3 7L7 12L15 1" stroke="#2A4F8A" stroke-width="2.8" fill="none"/><path d="M10 10L14 15" stroke="#000" stroke-width="2"/></svg><svg class="abs" style="left:772px;top:33px" width="16" height="16" viewBox="0 0 16 16"><rect x="0.7" y="0.7" width="14.6" height="14.6" fill="#fff" stroke="#000" stroke-width="1.4"/><path d="M3 4H13M3 6.5H13M3 9H13M3 11.5H13M6 2V14" stroke="#3A4A6A" stroke-width="0.9" stroke-dasharray="1.5 0.6"/></svg><svg class="abs" style="left:800px;top:33px" width="16" height="16" viewBox="0 0 16 16"><path d="M5 1H11L15 5V11L11 15H5L1 11V5Z" fill="#F0E000"/><circle cx="6" cy="4.5" r="1.6" fill="#000"/><path d="M3 8L6 6L9 8L11 6M6 6L5 11L3 13M6 9L8 12M9 9H14V12H10Z" stroke="#000" stroke-width="1.4" fill="none"/></svg><div class="sep" style="left:91px;top:32px;height:18px"></div><div class="sep" style="left:131px;top:32px;height:18px"></div><div class="sep" style="left:199px;top:32px;height:18px"></div><div class="sep" style="left:239px;top:32px;height:18px"></div><div class="sep" style="left:335px;top:32px;height:18px"></div><div class="sep" style="left:404px;top:32px;height:18px"></div><div class="sep" style="left:443px;top:32px;height:18px"></div><div class="sep" style="left:511px;top:32px;height:18px"></div><div class="sep" style="left:635px;top:32px;height:18px"></div><div class="sep" style="left:675px;top:32px;height:18px"></div><svg class="abs" style="left:7px;top:65px" width="16" height="16" viewBox="0 0 16 16"><rect x="1" y="1" width="1.3" height="1.3" fill="#000"/><rect x="1" y="5" width="1.3" height="1.3" fill="#000"/><rect x="1" y="9" width="1.3" height="1.3" fill="#000"/><rect x="1" y="13" width="1.3" height="1.3" fill="#000"/><rect x="5" y="1" width="1.3" height="1.3" fill="#000"/><rect x="5" y="5" width="1.3" height="1.3" fill="#000"/><rect x="5" y="9" width="1.3" height="1.3" fill="#000"/><rect x="5" y="13" width="1.3" height="1.3" fill="#000"/><rect x="9" y="1" width="1.3" height="1.3" fill="#000"/><rect x="9" y="5" width="1.3" height="1.3" fill="#000"/><rect x="9" y="9" width="1.3" height="1.3" fill="#000"/><rect x="9" y="13" width="1.3" height="1.3" fill="#000"/><rect x="13" y="1" width="1.3" height="1.3" fill="#000"/><rect x="13" y="5" width="1.3" height="1.3" fill="#000"/><rect x="13" y="9" width="1.3" height="1.3" fill="#000"/><rect x="13" y="13" width="1.3" height="1.3" fill="#000"/></svg><div class="pressed" style="left:3px;top:88px;width:26px;height:26px"></div><svg class="abs" style="left:8px;top:93px" width="16" height="16" viewBox="0 0 16 16"><rect x="6" y="2" width="4.5" height="1.5" fill="#3434A4"/><rect x="7.2" y="2" width="2.2" height="7" fill="#3434A4"/><rect x="6" y="7.7" width="4.5" height="1.5" fill="#3434A4"/><path d="M3 13.2H14" stroke="#000" stroke-width="1.3"/><path d="M2 13.2L5 10.7M2 13.2L5 15.7M15 13.2L12 10.7M15 13.2L12 15.7" stroke="#000" stroke-width="1.3"/></svg><svg class="abs" style="left:8px;top:122px" width="16" height="16" viewBox="0 0 16 16"><path d="M1 6V2.5Q1 1 2.5 1Q4 1 4 2.5V6M4 2.5Q4 1 5.5 1Q7 1 7 2.5V6M9 6V2.5Q9 1 10.5 1Q12 1 12 2.5V6M12 2.5Q12 1 13.5 1Q15 1 15 2.5V6" stroke="#F00" stroke-width="1.6" fill="none"/><path d="M2 11H14M2 11L5 8.5M2 11L5 13.5M14 11L11 8.5M14 11L11 13.5" stroke="#000" stroke-width="1.3"/></svg><svg class="abs" style="left:8px;top:149px" width="16" height="16" viewBox="0 0 16 16"><path d="M0 2H15M3 0V15" stroke="#000" stroke-width="1"/><path d="M5 3L13 10L9 10.5L11 14L9.5 15L7.5 11.5L5 13Z" fill="#B8B8F0" stroke="#000" stroke-width="0.8"/></svg><div class="hsep" style="left:7px;top:176px;width:18px"></div><svg class="abs" style="left:8px;top:188px" width="16" height="16" viewBox="0 0 16 16"><circle cx="2.5" cy="8" r="2" fill="#F8C0C0" stroke="#E03030" stroke-width="1.2"/><path d="M4.5 8H14" stroke="#E03030" stroke-width="0.9"/><path d="M9 1.5H11V5L14 12.5V15H6V12.5L9 5Z" fill="#D8D8F0" stroke="#000" stroke-width="1.1"/></svg><div class="hsep" style="left:7px;top:216px;width:18px"></div><div class="pressed" style="left:3px;top:224px;width:26px;height:26px"></div><svg class="abs" style="left:9px;top:230px" width="16" height="16" viewBox="0 0 16 16"><path d="M1.5 1V13.5H15" stroke="#000" stroke-width="1.3" fill="none"/><rect x="2.5" y="8" width="5" height="5" fill="#D0D0FF" stroke="#0000FF" stroke-width="1"/></svg><svg class="abs" style="left:1250px;top:64px" width="16" height="16" viewBox="0 0 16 16"><path d="M3 1L13 8L8.5 9L11.5 14L9.5 15.5L6.5 10.5L3 13.5Z" fill="#B8B8F0" stroke="#000" stroke-width="1"/></svg><svg class="abs" style="left:1250px;top:92px" width="16" height="16" viewBox="0 0 16 16"><rect x="0.5" y="0.5" width="8" height="2.5" fill="#D37FD8" stroke="#222" stroke-width="0.8"/><rect x="3" y="4" width="8" height="2.5" fill="#70C8CC" stroke="#222" stroke-width="0.8"/><rect x="8" y="8" width="7.5" height="2.5" fill="#77CC66" stroke="#222" stroke-width="0.8"/><rect x="8" y="12" width="7.5" height="2.5" fill="#77CC66" stroke="#222" stroke-width="0.8"/><path d="M5 6L11 11L8 11.5L9 15L7.5 15.5L6.5 12L5 13.5Z" fill="#B8B8F0" stroke="#000" stroke-width="0.8"/></svg><div class="hsep" style="left:1249px;top:120px;width:18px"></div><svg class="abs" style="left:1250px;top:133px" width="16" height="16" viewBox="0 0 16 16"><path d="M0 5H4M0 11H4M12 8H16" stroke="#E03030" stroke-width="1.2"/><path d="M3.5 2.5H8C11 2.5 12.5 5 12.5 8C12.5 11 11 13.5 8 13.5H3.5Z" fill="#D8D8F8" stroke="#E03030" stroke-width="1.4"/></svg><svg class="abs" style="left:1250px;top:161px" width="16" height="16" viewBox="0 0 16 16"><circle cx="8" cy="3" r="2.2" fill="#F8E0E0" stroke="#E03030" stroke-width="1.2"/><path d="M8 5V10M2 10H14L8 15Z" stroke="#E03030" stroke-width="1.4" fill="none"/></svg><div class="hsep" style="left:1249px;top:188px;width:18px"></div><div class="pressed" style="left:1245px;top:196px;width:26px;height:26px"></div><svg class="abs" style="left:1250px;top:201px" width="16" height="16" viewBox="0 0 16 16"><path d="M1.5 3H7V12H14.5" stroke="#007000" stroke-width="1.8" fill="none"/></svg><svg class="abs" style="left:1250px;top:228px" width="16" height="16" viewBox="0 0 16 16"><path d="M0.5 3H6.5V13H14.5" stroke="#0030E0" stroke-width="2.2" fill="none"/></svg><svg class="abs" style="left:1250px;top:256px" width="16" height="16" viewBox="0 0 16 16"><rect x="0.5" y="1" width="2.5" height="15" fill="#8080F0"/><path d="M4 9L9 3H15M4 12L9 6H15M4 15L9 9H15M4 16L9 12H15" stroke="#8CE000" stroke-width="1.4" fill="none"/><path d="M3 9L9 3M3 12L9 6M3 15L9 9" stroke="#207020" stroke-width="1"/></svg><svg class="abs" style="left:1250px;top:284px" width="16" height="16" viewBox="0 0 16 16"><rect x="0.5" y="1" width="2.5" height="15" fill="#8080F0"/><path d="M8 3H15M8 7H15M8 11H15" stroke="#A0A0F0" stroke-width="2.2"/><path d="M3 9L9 3M3 12L9 6M3 15L9 9" stroke="#000090" stroke-width="1.5"/></svg><div class="hsep" style="left:1249px;top:312px;width:18px"></div><svg class="abs" style="left:1250px;top:325px" width="16" height="16" viewBox="0 0 16 16"><path d="M2 2L14 14M14 2L2 14" stroke="#0000E0" stroke-width="1.1"/></svg><svg class="abs" style="left:1250px;top:353px" width="16" height="16" viewBox="0 0 16 16"><path d="M4 11L7.5 1.5H8.5L12 11M5.5 7.5H10.5" stroke="#000" stroke-width="2" fill="none"/><path d="M1 14H15" stroke="#00A000" stroke-width="2"/></svg><svg class="abs" style="left:1250px;top:381px" width="16" height="16" viewBox="0 0 16 16"><path d="M1 12L4 4H5L8 12M2 9.5H7" stroke="#706A20" stroke-width="1.8" fill="none"/><path d="M8.5 4H12L15.5 8L12 12H8.5Z" fill="#C8C8F8" stroke="#706A20" stroke-width="1.4"/></svg><svg class="abs" style="left:1250px;top:408px" width="16" height="16" viewBox="0 0 16 16"><path d="M8 0V16M0 8H16" stroke="#00A000" stroke-width="2"/><circle cx="8" cy="8" r="4.5" fill="#F0A060" stroke="#444" stroke-width="0.8"/></svg><div class="hsep" style="left:1249px;top:436px;width:18px"></div><svg class="abs" style="left:1250px;top:449px" width="16" height="16" viewBox="0 0 16 16"><path d="M1 0.5H6L9 3.5V15.5H1" stroke="#9020A0" stroke-width="1.2" fill="none"/><path d="M1 12L4 4H5L8 12M2 9.5H7" stroke="#706A20" stroke-width="1.8" fill="none"/><path d="M8.5 5H12L15.5 9L12 13H8.5Z" fill="#C8C8F8" stroke="#706A20" stroke-width="1.4"/></svg><svg class="abs" style="left:1250px;top:477px" width="16" height="16" viewBox="0 0 16 16"><rect x="0.8" y="2.8" width="14" height="12.4" rx="1.5" fill="#fff" stroke="#000" stroke-width="1.4"/><rect x="3" y="5" width="9.5" height="8" fill="#DCDCDC"/><path d="M12 0L16 0L16 4Z" fill="#E02020"/><path d="M11 3H13V5" fill="#F0D080"/></svg><svg class="abs" style="left:1250px;top:505px" width="16" height="16" viewBox="0 0 16 16"><path d="M4.5 1H12L15 4V15H4.5Z" fill="#fff" stroke="#000" stroke-width="1.3"/><path d="M7 12L9 5H10L12 12M7.5 9.5H11.5" stroke="#706A20" stroke-width="1.3" fill="none"/><path d="M1 2L5 6L1 7Z" fill="#20A020"/><path d="M1 3C3 3 6 4 6 6" stroke="#20A020" stroke-width="1.8" fill="none"/></svg><svg class="abs" style="left:1250px;top:533px" width="16" height="16" viewBox="0 0 16 16"><rect x="0.8" y="1.8" width="14.4" height="13.4" rx="1.5" fill="#fff" stroke="#000" stroke-width="1.4"/><rect x="3" y="5" width="10" height="8" fill="#DDD"/><path d="M2 9H14" stroke="#2060E0" stroke-width="1"/><path d="M4 7H8L10 9L8 11H4Z" fill="#30B030"/><path d="M11 0H15V4Z" fill="#F0A020"/><path d="M12 5L14 7" stroke="#E02020" stroke-width="2"/></svg><div class="hsep" style="left:1249px;top:560px;width:18px"></div><svg class="abs" style="left:1250px;top:573px" width="16" height="16" viewBox="0 0 16 16"><path d="M1 14L15 2" stroke="#2030A0" stroke-width="1.6" stroke-dasharray="5 2"/></svg><svg class="abs" style="left:1250px;top:601px" width="16" height="16" viewBox="0 0 16 16"><path d="M1 1H15V5.5H13.5L12.5 3H10V13.5L12 14.5V15.5H4V14.5L6 13.5V3H3.5L2.5 5.5H1Z" fill="#000090"/></svg><div class="hsep" style="left:1249px;top:628px;width:18px"></div><svg class="abs" style="left:1250px;top:640px" width="16" height="16" viewBox="0 0 16 16"><path d="M2 11L10 3L14 7L6 15Z" fill="#E02090"/><path d="M10 3L12.5 0.5L15.5 3.5L13 6Z" fill="#90D020"/><path d="M12 1.5L14.5 4" stroke="#E8E800" stroke-width="1.5"/><path d="M1 12L5 16H2L0 14Z" fill="#FFF"/></svg>
</body></html>
